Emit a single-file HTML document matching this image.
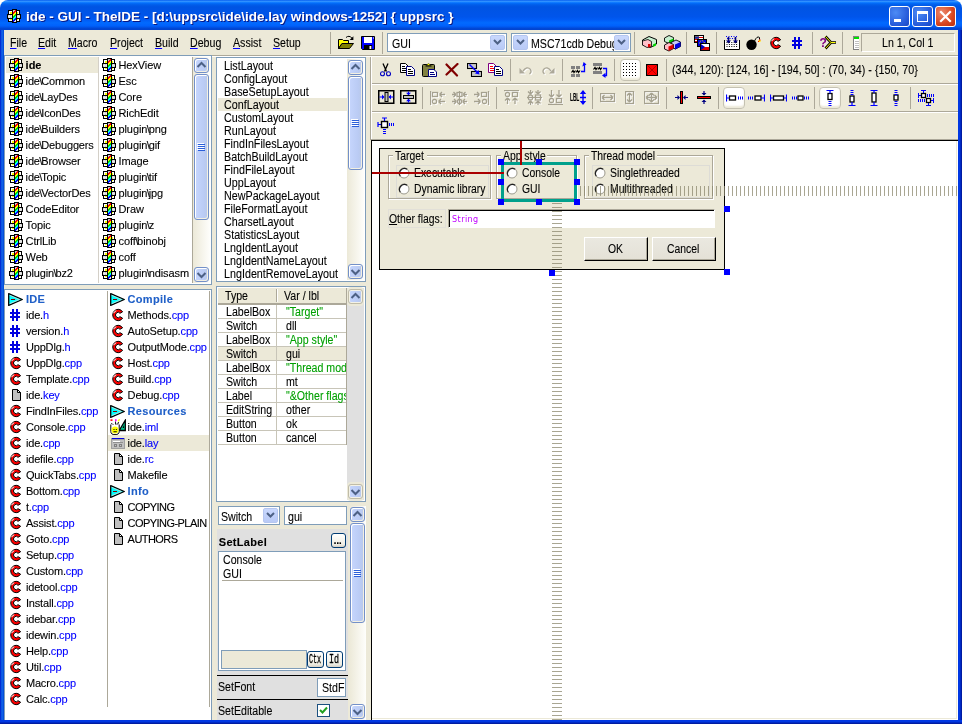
<!DOCTYPE html><html><head><meta charset="utf-8"><title>ide - GUI - TheIDE</title><style>
*{box-sizing:border-box;margin:0;padding:0}
html,body{width:962px;height:724px;overflow:hidden;background:#ECE9D8}
body{font-family:"Liberation Sans",sans-serif;font-size:11px;color:#000;position:relative}
.a,.t,.m,svg{position:absolute}
#win{position:absolute;left:0;top:0;width:962px;height:724px;background:#ECE9D8;overflow:hidden;will-change:transform}
#title{position:absolute;left:0;top:0;width:962px;height:30px;background:linear-gradient(to bottom,#0058EE 0%,#3593FF 4%,#288EFF 6%,#127DFF 8%,#036FFC 10%,#0262EE 14%,#0057E5 20%,#0054E3 24%,#0055EB 56%,#005BF5 66%,#026AFE 76%,#0061FC 86%,#0144D0 96%,#0144D0 100%);border-radius:8px 8px 0 0}
#title .txt{position:absolute;left:26px;top:9px;font-weight:bold;font-size:13.5px;line-height:16px;color:#fff;white-space:nowrap;text-shadow:1px 1px 0 #0A1883}
.bl{position:absolute;left:0;top:30px;width:4px;height:694px;background:linear-gradient(to right,#0019CF,#0441D8 25%,#166AEE 50%,#0855DD 75%,#0048D6)}
.br{position:absolute;left:958px;top:30px;width:4px;height:694px;background:linear-gradient(to right,#0037E2 0,#0037E2 45%,#0023B8 70%,#001590 100%)}
.bb{position:absolute;left:0;top:720px;width:962px;height:4px;background:linear-gradient(to bottom,#0037E2 0,#0037E2 45%,#0023B8 70%,#001590 100%)}
.tb{position:absolute;top:6px;width:21px;height:21px;border:1px solid #fff;border-radius:3px;background:radial-gradient(circle at 30% 30%,#4C8BF5,#2458D8 70%,#1C47C0)}
.tb.close{background:radial-gradient(circle at 30% 30%,#EC8A6E,#D8461F 60%,#B8300F)}
.t{white-space:nowrap;font-size:11px;line-height:16px;-webkit-text-stroke:.1px}
.m{white-space:nowrap;font-size:12px;line-height:13px;-webkit-text-stroke:.1px;transform:scaleX(.885);transform-origin:0 0}
.m u{text-decoration-color:#00f}
.vsep{position:absolute;width:2px;border-left:1px solid #ACA899;border-right:1px solid #fff}
.hsep{position:absolute;height:2px;border-top:1px solid #ACA899;border-bottom:1px solid #fff}
.panel{position:absolute;background:#fff;border:1px solid #7F9DB9}
.bs{margin:0 -1px 0 -0.5px}
.ext{color:#0000FF}
.grp{color:#2060C8;font-weight:bold;letter-spacing:.3px}
.sb{position:absolute;width:17px;background:linear-gradient(to right,#ECE9D8,#FEFEFB)}
.sbtn,.sthumb{position:absolute;left:1px;width:15px;border:1px solid #7390C8;border-radius:3px;background:linear-gradient(to right,#C6D6FD,#BACBF4 70%,#B9C9E8);box-shadow:inset 1px 1px 0 #fff,inset -1px -1px 0 #F3F0E2}
.sbtn{height:15px}
.sb.gray{background:#E0E0E0}
.sb.gray .sbtn{border-color:#C0BCA8;box-shadow:inset 0 0 0 1px #F4F2E6,0 0 0 1px #ECE9D8, 0 -1px 0 1px #ECE9D8, 0 1px 0 1px #ECE9D8}
.combo{position:absolute;background:#fff;border:1px solid #7F9DB9}
.cbtn{position:absolute;border:1px solid #B5C6F0;border-radius:2px;background:linear-gradient(to bottom,#C9D8FD,#B9CAF6)}
.xbtn{position:absolute;border:1px solid #003C74;border-radius:3px;background:linear-gradient(to bottom,#FFFFFF,#F0EEE4 80%,#D6D0C5)}
</style></head><body><div id="win">
<svg width="0" height="0"><defs><linearGradient id="rb" gradientUnits="userSpaceOnUse" x1="6" y1="1" x2="13" y2="8"><stop offset="0" stop-color="#C8C8C8"/><stop offset="0.178" stop-color="#C8C8C8"/><stop offset="0.178" stop-color="#F00"/><stop offset="0.321" stop-color="#F00"/><stop offset="0.321" stop-color="#FF0"/><stop offset="0.464" stop-color="#FF0"/><stop offset="0.464" stop-color="#0D0"/><stop offset="0.607" stop-color="#0D0"/><stop offset="0.607" stop-color="#0FF"/><stop offset="0.75" stop-color="#0FF"/><stop offset="0.75" stop-color="#00F"/><stop offset="0.893" stop-color="#00F"/><stop offset="0.893" stop-color="#E0E0E0"/><stop offset="1" stop-color="#E0E0E0"/></linearGradient></defs></svg>
<div class="a" style="left:0;top:0;width:962px;height:10px;background:#fff"></div>
<div id="title"><div class="txt">ide - GUI - TheIDE - [d:\uppsrc\ide\ide.lay windows-1252] { uppsrc }</div>
<svg style="left:7px;top:9px" width="14" height="14" viewBox="0 0 14 14" shape-rendering="crispEdges"><path d="M1 1H13V13H1Z M0 5H14V10H0Z M5 0H10V14H5Z" fill="#000"/><path d="M2 2H5V5H2Z M10 2H12V5H10Z M2 10H5V12H2Z M10 10H12V12H10Z" fill="#fff"/><path d="M3 3H5V5H3Z M10 3H11V5H10Z M3 10H5V11H3Z M10 10H11V11H10Z" fill="#FFFF00"/><path d="M1 6H5V9H1Z M10 6H13V9H10Z" fill="#C8C8C8"/><path d="M2 6H3V9H2Z M4 6H5V9H4Z M11 6H12V9H11Z M1 7H5V8H1Z M10 7H13V8H10Z" fill="#E8E8E8"/><rect x="6" y="1" width="3" height="12" fill="url(#rb)" shape-rendering="auto"/></svg>
<div class="tb" style="left:889px"><div class="a" style="left:4px;top:12px;width:7px;height:3px;background:#fff"></div></div>
<div class="tb" style="left:912px"><div class="a" style="left:4px;top:4px;width:11px;height:11px;border:1px solid #fff;border-top-width:3px"></div></div>
<div class="tb close" style="left:935px"><svg style="left:0;top:0" width="19" height="19"><path d="M5 5L14 14M14 5L5 14" stroke="#fff" stroke-width="2.2" stroke-linecap="square"/></svg></div></div>
<div class="m" style="left:10px;top:37px;"><u>F</u>ile</div>
<div class="m" style="left:38px;top:37px;"><u>E</u>dit</div>
<div class="m" style="left:68.3px;top:37px;"><u>M</u>acro</div>
<div class="m" style="left:110.3px;top:37px;"><u>P</u>roject</div>
<div class="m" style="left:155px;top:37px;"><u>B</u>uild</div>
<div class="m" style="left:190px;top:37px;"><u>D</u>ebug</div>
<div class="m" style="left:233px;top:37px;"><u>A</u>ssist</div>
<div class="m" style="left:273px;top:37px;"><u>S</u>etup</div>
<div class="a" style="left:330px;top:32px;width:1px;height:22px;background:#ACA899"></div>
<div class="a" style="left:382px;top:32px;width:1px;height:22px;background:#ACA899"></div>
<div class="a" style="left:634px;top:32px;width:1px;height:22px;background:#ACA899"></div>
<div class="a" style="left:686px;top:32px;width:1px;height:22px;background:#ACA899"></div>
<div class="a" style="left:716px;top:32px;width:1px;height:22px;background:#ACA899"></div>
<div class="a" style="left:812px;top:32px;width:1px;height:22px;background:#ACA899"></div>
<div class="a" style="left:842px;top:32px;width:1px;height:22px;background:#ACA899"></div>
<div class="combo" style="left:387px;top:33px;width:120px;height:19px">
<div class="cbtn" style="right:1px;top:1px;width:15px;height:15px"><svg width="9" height="6" viewBox="0 0 9 6" style="left:2px;top:3px"><path d="M1 1L4.5 4.5L8 1" fill="none" stroke="#4D6185" stroke-width="2"/></svg></div>
<div class="a" style="left:4px;top:3.5px;overflow:hidden;width:98px;height:15px"><div class="m" style="left:0;top:0">GUI</div></div></div>
<div class="combo" style="left:511px;top:33px;width:120px;height:19px">
<div class="cbtn" style="right:1px;top:1px;width:15px;height:15px"><svg width="9" height="6" viewBox="0 0 9 6" style="left:2px;top:3px"><path d="M1 1L4.5 4.5L8 1" fill="none" stroke="#4D6185" stroke-width="2"/></svg></div>
<div class="cbtn" style="left:1px;top:1px;width:15px;height:15px"><svg width="9" height="6" viewBox="0 0 9 6" style="left:2px;top:3px"><path d="M1 1L4.5 4.5L8 1" fill="none" stroke="#4D6185" stroke-width="2"/></svg></div>
<div class="a" style="left:19px;top:3.5px;overflow:hidden;width:83px;height:15px"><div class="m" style="left:0;top:0">MSC71cdb Debug</div></div></div>
<div class="a" style="left:861px;top:33px;width:94px;height:19px;border:1px solid;border-color:#ACA899 #fff #fff #ACA899"></div>
<div class="m" style="left:882px;top:37px;">Ln 1, Col 1</div>
<svg style="left:853px;top:36px" width="6" height="14" viewBox="0 0 6 14" shape-rendering="crispEdges"><rect x="0" y="0" width="6" height="14" fill="#fff"/><path d="M0 0H6V1H0Z M0 0H1V14H0Z M0 13H6V14H0Z" fill="#808080"/><rect x="1" y="1" width="5" height="2" fill="#00E000"/><path d="M2 5H6V6H2Z M2 7H6V8H2Z M2 9H6V10H2Z M2 11H6V12H2Z" fill="#C0C0C0"/></svg>
<div class="a" style="left:4px;top:55px;width:954px;height:1px;background:#ACA899"></div>
<div class="a" style="left:4px;top:56px;width:954px;height:1px;background:#fff"></div>
<div class="panel" style="left:4px;top:55px;width:208px;height:230px"></div>
<div class="a" style="left:6px;top:57px;width:92px;height:16px;background:#ECE9D8"></div>
<div class="a" style="left:98px;top:57px;width:1px;height:226px;background:#D4D0C8"></div>
<div class="a" style="left:192px;top:57px;width:1px;height:226px;background:#ACA899"></div>
<svg style="left:9px;top:58px" width="14" height="14" viewBox="0 0 14 14" shape-rendering="crispEdges"><path d="M1 1H13V13H1Z M0 5H14V10H0Z M5 0H10V14H5Z" fill="#000"/><path d="M2 2H5V5H2Z M10 2H12V5H10Z M2 10H5V12H2Z M10 10H12V12H10Z" fill="#fff"/><path d="M3 3H5V5H3Z M10 3H11V5H10Z M3 10H5V11H3Z M10 10H11V11H10Z" fill="#FFFF00"/><path d="M1 6H5V9H1Z M10 6H13V9H10Z" fill="#C8C8C8"/><path d="M2 6H3V9H2Z M4 6H5V9H4Z M11 6H12V9H11Z M1 7H5V8H1Z M10 7H13V8H10Z" fill="#E8E8E8"/><rect x="6" y="1" width="3" height="12" fill="url(#rb)" shape-rendering="auto"/></svg>
<div class="t" style="left:25.6px;top:57px;font-weight:bold">ide</div>
<svg style="left:102px;top:58px" width="14" height="14" viewBox="0 0 14 14" shape-rendering="crispEdges"><path d="M1 1H13V13H1Z M0 5H14V10H0Z M5 0H10V14H5Z" fill="#000"/><path d="M2 2H5V5H2Z M10 2H12V5H10Z M2 10H5V12H2Z M10 10H12V12H10Z" fill="#fff"/><path d="M3 3H5V5H3Z M10 3H11V5H10Z M3 10H5V11H3Z M10 10H11V11H10Z" fill="#FFFF00"/><path d="M1 6H5V9H1Z M10 6H13V9H10Z" fill="#C8C8C8"/><path d="M2 6H3V9H2Z M4 6H5V9H4Z M11 6H12V9H11Z M1 7H5V8H1Z M10 7H13V8H10Z" fill="#E8E8E8"/><rect x="6" y="1" width="3" height="12" fill="url(#rb)" shape-rendering="auto"/></svg>
<div class="t" style="left:118.5px;top:57px;letter-spacing:-.1px">HexView</div>
<svg style="left:9px;top:74px" width="14" height="14" viewBox="0 0 14 14" shape-rendering="crispEdges"><path d="M1 1H13V13H1Z M0 5H14V10H0Z M5 0H10V14H5Z" fill="#000"/><path d="M2 2H5V5H2Z M10 2H12V5H10Z M2 10H5V12H2Z M10 10H12V12H10Z" fill="#fff"/><path d="M3 3H5V5H3Z M10 3H11V5H10Z M3 10H5V11H3Z M10 10H11V11H10Z" fill="#FFFF00"/><path d="M1 6H5V9H1Z M10 6H13V9H10Z" fill="#C8C8C8"/><path d="M2 6H3V9H2Z M4 6H5V9H4Z M11 6H12V9H11Z M1 7H5V8H1Z M10 7H13V8H10Z" fill="#E8E8E8"/><rect x="6" y="1" width="3" height="12" fill="url(#rb)" shape-rendering="auto"/></svg>
<div class="t" style="left:25.6px;top:73px;letter-spacing:-.15px">ide<span class="bs">\</span>Common</div>
<svg style="left:102px;top:74px" width="14" height="14" viewBox="0 0 14 14" shape-rendering="crispEdges"><path d="M1 1H13V13H1Z M0 5H14V10H0Z M5 0H10V14H5Z" fill="#000"/><path d="M2 2H5V5H2Z M10 2H12V5H10Z M2 10H5V12H2Z M10 10H12V12H10Z" fill="#fff"/><path d="M3 3H5V5H3Z M10 3H11V5H10Z M3 10H5V11H3Z M10 10H11V11H10Z" fill="#FFFF00"/><path d="M1 6H5V9H1Z M10 6H13V9H10Z" fill="#C8C8C8"/><path d="M2 6H3V9H2Z M4 6H5V9H4Z M11 6H12V9H11Z M1 7H5V8H1Z M10 7H13V8H10Z" fill="#E8E8E8"/><rect x="6" y="1" width="3" height="12" fill="url(#rb)" shape-rendering="auto"/></svg>
<div class="t" style="left:118.5px;top:73px;letter-spacing:-.1px">Esc</div>
<svg style="left:9px;top:90px" width="14" height="14" viewBox="0 0 14 14" shape-rendering="crispEdges"><path d="M1 1H13V13H1Z M0 5H14V10H0Z M5 0H10V14H5Z" fill="#000"/><path d="M2 2H5V5H2Z M10 2H12V5H10Z M2 10H5V12H2Z M10 10H12V12H10Z" fill="#fff"/><path d="M3 3H5V5H3Z M10 3H11V5H10Z M3 10H5V11H3Z M10 10H11V11H10Z" fill="#FFFF00"/><path d="M1 6H5V9H1Z M10 6H13V9H10Z" fill="#C8C8C8"/><path d="M2 6H3V9H2Z M4 6H5V9H4Z M11 6H12V9H11Z M1 7H5V8H1Z M10 7H13V8H10Z" fill="#E8E8E8"/><rect x="6" y="1" width="3" height="12" fill="url(#rb)" shape-rendering="auto"/></svg>
<div class="t" style="left:25.6px;top:89px;letter-spacing:-.15px">ide<span class="bs">\</span>LayDes</div>
<svg style="left:102px;top:90px" width="14" height="14" viewBox="0 0 14 14" shape-rendering="crispEdges"><path d="M1 1H13V13H1Z M0 5H14V10H0Z M5 0H10V14H5Z" fill="#000"/><path d="M2 2H5V5H2Z M10 2H12V5H10Z M2 10H5V12H2Z M10 10H12V12H10Z" fill="#fff"/><path d="M3 3H5V5H3Z M10 3H11V5H10Z M3 10H5V11H3Z M10 10H11V11H10Z" fill="#FFFF00"/><path d="M1 6H5V9H1Z M10 6H13V9H10Z" fill="#C8C8C8"/><path d="M2 6H3V9H2Z M4 6H5V9H4Z M11 6H12V9H11Z M1 7H5V8H1Z M10 7H13V8H10Z" fill="#E8E8E8"/><rect x="6" y="1" width="3" height="12" fill="url(#rb)" shape-rendering="auto"/></svg>
<div class="t" style="left:118.5px;top:89px;letter-spacing:-.1px">Core</div>
<svg style="left:9px;top:106px" width="14" height="14" viewBox="0 0 14 14" shape-rendering="crispEdges"><path d="M1 1H13V13H1Z M0 5H14V10H0Z M5 0H10V14H5Z" fill="#000"/><path d="M2 2H5V5H2Z M10 2H12V5H10Z M2 10H5V12H2Z M10 10H12V12H10Z" fill="#fff"/><path d="M3 3H5V5H3Z M10 3H11V5H10Z M3 10H5V11H3Z M10 10H11V11H10Z" fill="#FFFF00"/><path d="M1 6H5V9H1Z M10 6H13V9H10Z" fill="#C8C8C8"/><path d="M2 6H3V9H2Z M4 6H5V9H4Z M11 6H12V9H11Z M1 7H5V8H1Z M10 7H13V8H10Z" fill="#E8E8E8"/><rect x="6" y="1" width="3" height="12" fill="url(#rb)" shape-rendering="auto"/></svg>
<div class="t" style="left:25.6px;top:105px;letter-spacing:-.15px">ide<span class="bs">\</span>IconDes</div>
<svg style="left:102px;top:106px" width="14" height="14" viewBox="0 0 14 14" shape-rendering="crispEdges"><path d="M1 1H13V13H1Z M0 5H14V10H0Z M5 0H10V14H5Z" fill="#000"/><path d="M2 2H5V5H2Z M10 2H12V5H10Z M2 10H5V12H2Z M10 10H12V12H10Z" fill="#fff"/><path d="M3 3H5V5H3Z M10 3H11V5H10Z M3 10H5V11H3Z M10 10H11V11H10Z" fill="#FFFF00"/><path d="M1 6H5V9H1Z M10 6H13V9H10Z" fill="#C8C8C8"/><path d="M2 6H3V9H2Z M4 6H5V9H4Z M11 6H12V9H11Z M1 7H5V8H1Z M10 7H13V8H10Z" fill="#E8E8E8"/><rect x="6" y="1" width="3" height="12" fill="url(#rb)" shape-rendering="auto"/></svg>
<div class="t" style="left:118.5px;top:105px;letter-spacing:-.1px">RichEdit</div>
<svg style="left:9px;top:122px" width="14" height="14" viewBox="0 0 14 14" shape-rendering="crispEdges"><path d="M1 1H13V13H1Z M0 5H14V10H0Z M5 0H10V14H5Z" fill="#000"/><path d="M2 2H5V5H2Z M10 2H12V5H10Z M2 10H5V12H2Z M10 10H12V12H10Z" fill="#fff"/><path d="M3 3H5V5H3Z M10 3H11V5H10Z M3 10H5V11H3Z M10 10H11V11H10Z" fill="#FFFF00"/><path d="M1 6H5V9H1Z M10 6H13V9H10Z" fill="#C8C8C8"/><path d="M2 6H3V9H2Z M4 6H5V9H4Z M11 6H12V9H11Z M1 7H5V8H1Z M10 7H13V8H10Z" fill="#E8E8E8"/><rect x="6" y="1" width="3" height="12" fill="url(#rb)" shape-rendering="auto"/></svg>
<div class="t" style="left:25.6px;top:121px;letter-spacing:-.15px">ide<span class="bs">\</span>Builders</div>
<svg style="left:102px;top:122px" width="14" height="14" viewBox="0 0 14 14" shape-rendering="crispEdges"><path d="M1 1H13V13H1Z M0 5H14V10H0Z M5 0H10V14H5Z" fill="#000"/><path d="M2 2H5V5H2Z M10 2H12V5H10Z M2 10H5V12H2Z M10 10H12V12H10Z" fill="#fff"/><path d="M3 3H5V5H3Z M10 3H11V5H10Z M3 10H5V11H3Z M10 10H11V11H10Z" fill="#FFFF00"/><path d="M1 6H5V9H1Z M10 6H13V9H10Z" fill="#C8C8C8"/><path d="M2 6H3V9H2Z M4 6H5V9H4Z M11 6H12V9H11Z M1 7H5V8H1Z M10 7H13V8H10Z" fill="#E8E8E8"/><rect x="6" y="1" width="3" height="12" fill="url(#rb)" shape-rendering="auto"/></svg>
<div class="t" style="left:118.5px;top:121px;letter-spacing:-.1px">plugin<span class="bs">\</span>png</div>
<svg style="left:9px;top:138px" width="14" height="14" viewBox="0 0 14 14" shape-rendering="crispEdges"><path d="M1 1H13V13H1Z M0 5H14V10H0Z M5 0H10V14H5Z" fill="#000"/><path d="M2 2H5V5H2Z M10 2H12V5H10Z M2 10H5V12H2Z M10 10H12V12H10Z" fill="#fff"/><path d="M3 3H5V5H3Z M10 3H11V5H10Z M3 10H5V11H3Z M10 10H11V11H10Z" fill="#FFFF00"/><path d="M1 6H5V9H1Z M10 6H13V9H10Z" fill="#C8C8C8"/><path d="M2 6H3V9H2Z M4 6H5V9H4Z M11 6H12V9H11Z M1 7H5V8H1Z M10 7H13V8H10Z" fill="#E8E8E8"/><rect x="6" y="1" width="3" height="12" fill="url(#rb)" shape-rendering="auto"/></svg>
<div class="t" style="left:25.6px;top:137px;letter-spacing:-.15px">ide<span class="bs">\</span>Debuggers</div>
<svg style="left:102px;top:138px" width="14" height="14" viewBox="0 0 14 14" shape-rendering="crispEdges"><path d="M1 1H13V13H1Z M0 5H14V10H0Z M5 0H10V14H5Z" fill="#000"/><path d="M2 2H5V5H2Z M10 2H12V5H10Z M2 10H5V12H2Z M10 10H12V12H10Z" fill="#fff"/><path d="M3 3H5V5H3Z M10 3H11V5H10Z M3 10H5V11H3Z M10 10H11V11H10Z" fill="#FFFF00"/><path d="M1 6H5V9H1Z M10 6H13V9H10Z" fill="#C8C8C8"/><path d="M2 6H3V9H2Z M4 6H5V9H4Z M11 6H12V9H11Z M1 7H5V8H1Z M10 7H13V8H10Z" fill="#E8E8E8"/><rect x="6" y="1" width="3" height="12" fill="url(#rb)" shape-rendering="auto"/></svg>
<div class="t" style="left:118.5px;top:137px;letter-spacing:-.1px">plugin<span class="bs">\</span>gif</div>
<svg style="left:9px;top:154px" width="14" height="14" viewBox="0 0 14 14" shape-rendering="crispEdges"><path d="M1 1H13V13H1Z M0 5H14V10H0Z M5 0H10V14H5Z" fill="#000"/><path d="M2 2H5V5H2Z M10 2H12V5H10Z M2 10H5V12H2Z M10 10H12V12H10Z" fill="#fff"/><path d="M3 3H5V5H3Z M10 3H11V5H10Z M3 10H5V11H3Z M10 10H11V11H10Z" fill="#FFFF00"/><path d="M1 6H5V9H1Z M10 6H13V9H10Z" fill="#C8C8C8"/><path d="M2 6H3V9H2Z M4 6H5V9H4Z M11 6H12V9H11Z M1 7H5V8H1Z M10 7H13V8H10Z" fill="#E8E8E8"/><rect x="6" y="1" width="3" height="12" fill="url(#rb)" shape-rendering="auto"/></svg>
<div class="t" style="left:25.6px;top:153px;letter-spacing:-.15px">ide<span class="bs">\</span>Browser</div>
<svg style="left:102px;top:154px" width="14" height="14" viewBox="0 0 14 14" shape-rendering="crispEdges"><path d="M1 1H13V13H1Z M0 5H14V10H0Z M5 0H10V14H5Z" fill="#000"/><path d="M2 2H5V5H2Z M10 2H12V5H10Z M2 10H5V12H2Z M10 10H12V12H10Z" fill="#fff"/><path d="M3 3H5V5H3Z M10 3H11V5H10Z M3 10H5V11H3Z M10 10H11V11H10Z" fill="#FFFF00"/><path d="M1 6H5V9H1Z M10 6H13V9H10Z" fill="#C8C8C8"/><path d="M2 6H3V9H2Z M4 6H5V9H4Z M11 6H12V9H11Z M1 7H5V8H1Z M10 7H13V8H10Z" fill="#E8E8E8"/><rect x="6" y="1" width="3" height="12" fill="url(#rb)" shape-rendering="auto"/></svg>
<div class="t" style="left:118.5px;top:153px;letter-spacing:-.1px">Image</div>
<svg style="left:9px;top:170px" width="14" height="14" viewBox="0 0 14 14" shape-rendering="crispEdges"><path d="M1 1H13V13H1Z M0 5H14V10H0Z M5 0H10V14H5Z" fill="#000"/><path d="M2 2H5V5H2Z M10 2H12V5H10Z M2 10H5V12H2Z M10 10H12V12H10Z" fill="#fff"/><path d="M3 3H5V5H3Z M10 3H11V5H10Z M3 10H5V11H3Z M10 10H11V11H10Z" fill="#FFFF00"/><path d="M1 6H5V9H1Z M10 6H13V9H10Z" fill="#C8C8C8"/><path d="M2 6H3V9H2Z M4 6H5V9H4Z M11 6H12V9H11Z M1 7H5V8H1Z M10 7H13V8H10Z" fill="#E8E8E8"/><rect x="6" y="1" width="3" height="12" fill="url(#rb)" shape-rendering="auto"/></svg>
<div class="t" style="left:25.6px;top:169px;letter-spacing:-.15px">ide<span class="bs">\</span>Topic</div>
<svg style="left:102px;top:170px" width="14" height="14" viewBox="0 0 14 14" shape-rendering="crispEdges"><path d="M1 1H13V13H1Z M0 5H14V10H0Z M5 0H10V14H5Z" fill="#000"/><path d="M2 2H5V5H2Z M10 2H12V5H10Z M2 10H5V12H2Z M10 10H12V12H10Z" fill="#fff"/><path d="M3 3H5V5H3Z M10 3H11V5H10Z M3 10H5V11H3Z M10 10H11V11H10Z" fill="#FFFF00"/><path d="M1 6H5V9H1Z M10 6H13V9H10Z" fill="#C8C8C8"/><path d="M2 6H3V9H2Z M4 6H5V9H4Z M11 6H12V9H11Z M1 7H5V8H1Z M10 7H13V8H10Z" fill="#E8E8E8"/><rect x="6" y="1" width="3" height="12" fill="url(#rb)" shape-rendering="auto"/></svg>
<div class="t" style="left:118.5px;top:169px;letter-spacing:-.1px">plugin<span class="bs">\</span>tif</div>
<svg style="left:9px;top:186px" width="14" height="14" viewBox="0 0 14 14" shape-rendering="crispEdges"><path d="M1 1H13V13H1Z M0 5H14V10H0Z M5 0H10V14H5Z" fill="#000"/><path d="M2 2H5V5H2Z M10 2H12V5H10Z M2 10H5V12H2Z M10 10H12V12H10Z" fill="#fff"/><path d="M3 3H5V5H3Z M10 3H11V5H10Z M3 10H5V11H3Z M10 10H11V11H10Z" fill="#FFFF00"/><path d="M1 6H5V9H1Z M10 6H13V9H10Z" fill="#C8C8C8"/><path d="M2 6H3V9H2Z M4 6H5V9H4Z M11 6H12V9H11Z M1 7H5V8H1Z M10 7H13V8H10Z" fill="#E8E8E8"/><rect x="6" y="1" width="3" height="12" fill="url(#rb)" shape-rendering="auto"/></svg>
<div class="t" style="left:25.6px;top:185px;letter-spacing:-.15px">ide<span class="bs">\</span>VectorDes</div>
<svg style="left:102px;top:186px" width="14" height="14" viewBox="0 0 14 14" shape-rendering="crispEdges"><path d="M1 1H13V13H1Z M0 5H14V10H0Z M5 0H10V14H5Z" fill="#000"/><path d="M2 2H5V5H2Z M10 2H12V5H10Z M2 10H5V12H2Z M10 10H12V12H10Z" fill="#fff"/><path d="M3 3H5V5H3Z M10 3H11V5H10Z M3 10H5V11H3Z M10 10H11V11H10Z" fill="#FFFF00"/><path d="M1 6H5V9H1Z M10 6H13V9H10Z" fill="#C8C8C8"/><path d="M2 6H3V9H2Z M4 6H5V9H4Z M11 6H12V9H11Z M1 7H5V8H1Z M10 7H13V8H10Z" fill="#E8E8E8"/><rect x="6" y="1" width="3" height="12" fill="url(#rb)" shape-rendering="auto"/></svg>
<div class="t" style="left:118.5px;top:185px;letter-spacing:-.1px">plugin<span class="bs">\</span>jpg</div>
<svg style="left:9px;top:202px" width="14" height="14" viewBox="0 0 14 14" shape-rendering="crispEdges"><path d="M1 1H13V13H1Z M0 5H14V10H0Z M5 0H10V14H5Z" fill="#000"/><path d="M2 2H5V5H2Z M10 2H12V5H10Z M2 10H5V12H2Z M10 10H12V12H10Z" fill="#fff"/><path d="M3 3H5V5H3Z M10 3H11V5H10Z M3 10H5V11H3Z M10 10H11V11H10Z" fill="#FFFF00"/><path d="M1 6H5V9H1Z M10 6H13V9H10Z" fill="#C8C8C8"/><path d="M2 6H3V9H2Z M4 6H5V9H4Z M11 6H12V9H11Z M1 7H5V8H1Z M10 7H13V8H10Z" fill="#E8E8E8"/><rect x="6" y="1" width="3" height="12" fill="url(#rb)" shape-rendering="auto"/></svg>
<div class="t" style="left:25.6px;top:201px;letter-spacing:-.15px">CodeEditor</div>
<svg style="left:102px;top:202px" width="14" height="14" viewBox="0 0 14 14" shape-rendering="crispEdges"><path d="M1 1H13V13H1Z M0 5H14V10H0Z M5 0H10V14H5Z" fill="#000"/><path d="M2 2H5V5H2Z M10 2H12V5H10Z M2 10H5V12H2Z M10 10H12V12H10Z" fill="#fff"/><path d="M3 3H5V5H3Z M10 3H11V5H10Z M3 10H5V11H3Z M10 10H11V11H10Z" fill="#FFFF00"/><path d="M1 6H5V9H1Z M10 6H13V9H10Z" fill="#C8C8C8"/><path d="M2 6H3V9H2Z M4 6H5V9H4Z M11 6H12V9H11Z M1 7H5V8H1Z M10 7H13V8H10Z" fill="#E8E8E8"/><rect x="6" y="1" width="3" height="12" fill="url(#rb)" shape-rendering="auto"/></svg>
<div class="t" style="left:118.5px;top:201px;letter-spacing:-.1px">Draw</div>
<svg style="left:9px;top:218px" width="14" height="14" viewBox="0 0 14 14" shape-rendering="crispEdges"><path d="M1 1H13V13H1Z M0 5H14V10H0Z M5 0H10V14H5Z" fill="#000"/><path d="M2 2H5V5H2Z M10 2H12V5H10Z M2 10H5V12H2Z M10 10H12V12H10Z" fill="#fff"/><path d="M3 3H5V5H3Z M10 3H11V5H10Z M3 10H5V11H3Z M10 10H11V11H10Z" fill="#FFFF00"/><path d="M1 6H5V9H1Z M10 6H13V9H10Z" fill="#C8C8C8"/><path d="M2 6H3V9H2Z M4 6H5V9H4Z M11 6H12V9H11Z M1 7H5V8H1Z M10 7H13V8H10Z" fill="#E8E8E8"/><rect x="6" y="1" width="3" height="12" fill="url(#rb)" shape-rendering="auto"/></svg>
<div class="t" style="left:25.6px;top:217px;letter-spacing:-.15px">Topic</div>
<svg style="left:102px;top:218px" width="14" height="14" viewBox="0 0 14 14" shape-rendering="crispEdges"><path d="M1 1H13V13H1Z M0 5H14V10H0Z M5 0H10V14H5Z" fill="#000"/><path d="M2 2H5V5H2Z M10 2H12V5H10Z M2 10H5V12H2Z M10 10H12V12H10Z" fill="#fff"/><path d="M3 3H5V5H3Z M10 3H11V5H10Z M3 10H5V11H3Z M10 10H11V11H10Z" fill="#FFFF00"/><path d="M1 6H5V9H1Z M10 6H13V9H10Z" fill="#C8C8C8"/><path d="M2 6H3V9H2Z M4 6H5V9H4Z M11 6H12V9H11Z M1 7H5V8H1Z M10 7H13V8H10Z" fill="#E8E8E8"/><rect x="6" y="1" width="3" height="12" fill="url(#rb)" shape-rendering="auto"/></svg>
<div class="t" style="left:118.5px;top:217px;letter-spacing:-.1px">plugin<span class="bs">\</span>z</div>
<svg style="left:9px;top:234px" width="14" height="14" viewBox="0 0 14 14" shape-rendering="crispEdges"><path d="M1 1H13V13H1Z M0 5H14V10H0Z M5 0H10V14H5Z" fill="#000"/><path d="M2 2H5V5H2Z M10 2H12V5H10Z M2 10H5V12H2Z M10 10H12V12H10Z" fill="#fff"/><path d="M3 3H5V5H3Z M10 3H11V5H10Z M3 10H5V11H3Z M10 10H11V11H10Z" fill="#FFFF00"/><path d="M1 6H5V9H1Z M10 6H13V9H10Z" fill="#C8C8C8"/><path d="M2 6H3V9H2Z M4 6H5V9H4Z M11 6H12V9H11Z M1 7H5V8H1Z M10 7H13V8H10Z" fill="#E8E8E8"/><rect x="6" y="1" width="3" height="12" fill="url(#rb)" shape-rendering="auto"/></svg>
<div class="t" style="left:25.6px;top:233px;letter-spacing:-.15px">CtrlLib</div>
<svg style="left:102px;top:234px" width="14" height="14" viewBox="0 0 14 14" shape-rendering="crispEdges"><path d="M1 1H13V13H1Z M0 5H14V10H0Z M5 0H10V14H5Z" fill="#000"/><path d="M2 2H5V5H2Z M10 2H12V5H10Z M2 10H5V12H2Z M10 10H12V12H10Z" fill="#fff"/><path d="M3 3H5V5H3Z M10 3H11V5H10Z M3 10H5V11H3Z M10 10H11V11H10Z" fill="#FFFF00"/><path d="M1 6H5V9H1Z M10 6H13V9H10Z" fill="#C8C8C8"/><path d="M2 6H3V9H2Z M4 6H5V9H4Z M11 6H12V9H11Z M1 7H5V8H1Z M10 7H13V8H10Z" fill="#E8E8E8"/><rect x="6" y="1" width="3" height="12" fill="url(#rb)" shape-rendering="auto"/></svg>
<div class="t" style="left:118.5px;top:233px;letter-spacing:-.1px">coff<span class="bs">\</span>binobj</div>
<svg style="left:9px;top:250px" width="14" height="14" viewBox="0 0 14 14" shape-rendering="crispEdges"><path d="M1 1H13V13H1Z M0 5H14V10H0Z M5 0H10V14H5Z" fill="#000"/><path d="M2 2H5V5H2Z M10 2H12V5H10Z M2 10H5V12H2Z M10 10H12V12H10Z" fill="#fff"/><path d="M3 3H5V5H3Z M10 3H11V5H10Z M3 10H5V11H3Z M10 10H11V11H10Z" fill="#FFFF00"/><path d="M1 6H5V9H1Z M10 6H13V9H10Z" fill="#C8C8C8"/><path d="M2 6H3V9H2Z M4 6H5V9H4Z M11 6H12V9H11Z M1 7H5V8H1Z M10 7H13V8H10Z" fill="#E8E8E8"/><rect x="6" y="1" width="3" height="12" fill="url(#rb)" shape-rendering="auto"/></svg>
<div class="t" style="left:25.6px;top:249px;letter-spacing:-.15px">Web</div>
<svg style="left:102px;top:250px" width="14" height="14" viewBox="0 0 14 14" shape-rendering="crispEdges"><path d="M1 1H13V13H1Z M0 5H14V10H0Z M5 0H10V14H5Z" fill="#000"/><path d="M2 2H5V5H2Z M10 2H12V5H10Z M2 10H5V12H2Z M10 10H12V12H10Z" fill="#fff"/><path d="M3 3H5V5H3Z M10 3H11V5H10Z M3 10H5V11H3Z M10 10H11V11H10Z" fill="#FFFF00"/><path d="M1 6H5V9H1Z M10 6H13V9H10Z" fill="#C8C8C8"/><path d="M2 6H3V9H2Z M4 6H5V9H4Z M11 6H12V9H11Z M1 7H5V8H1Z M10 7H13V8H10Z" fill="#E8E8E8"/><rect x="6" y="1" width="3" height="12" fill="url(#rb)" shape-rendering="auto"/></svg>
<div class="t" style="left:118.5px;top:249px;letter-spacing:-.1px">coff</div>
<svg style="left:9px;top:266px" width="14" height="14" viewBox="0 0 14 14" shape-rendering="crispEdges"><path d="M1 1H13V13H1Z M0 5H14V10H0Z M5 0H10V14H5Z" fill="#000"/><path d="M2 2H5V5H2Z M10 2H12V5H10Z M2 10H5V12H2Z M10 10H12V12H10Z" fill="#fff"/><path d="M3 3H5V5H3Z M10 3H11V5H10Z M3 10H5V11H3Z M10 10H11V11H10Z" fill="#FFFF00"/><path d="M1 6H5V9H1Z M10 6H13V9H10Z" fill="#C8C8C8"/><path d="M2 6H3V9H2Z M4 6H5V9H4Z M11 6H12V9H11Z M1 7H5V8H1Z M10 7H13V8H10Z" fill="#E8E8E8"/><rect x="6" y="1" width="3" height="12" fill="url(#rb)" shape-rendering="auto"/></svg>
<div class="t" style="left:25.6px;top:265px;letter-spacing:-.15px">plugin<span class="bs">\</span>bz2</div>
<svg style="left:102px;top:266px" width="14" height="14" viewBox="0 0 14 14" shape-rendering="crispEdges"><path d="M1 1H13V13H1Z M0 5H14V10H0Z M5 0H10V14H5Z" fill="#000"/><path d="M2 2H5V5H2Z M10 2H12V5H10Z M2 10H5V12H2Z M10 10H12V12H10Z" fill="#fff"/><path d="M3 3H5V5H3Z M10 3H11V5H10Z M3 10H5V11H3Z M10 10H11V11H10Z" fill="#FFFF00"/><path d="M1 6H5V9H1Z M10 6H13V9H10Z" fill="#C8C8C8"/><path d="M2 6H3V9H2Z M4 6H5V9H4Z M11 6H12V9H11Z M1 7H5V8H1Z M10 7H13V8H10Z" fill="#E8E8E8"/><rect x="6" y="1" width="3" height="12" fill="url(#rb)" shape-rendering="auto"/></svg>
<div class="t" style="left:118.5px;top:265px;letter-spacing:-.1px">plugin<span class="bs">\</span>ndisasm</div>
<div class="sb" style="left:193px;top:57px;height:226px">
<div class="sbtn" style="top:1px"><svg width="13" height="13" viewBox="0 0 13 13" style="left:0;top:0"><path d="M2.5 8L6.5 4L10.5 8" fill="none" stroke="#4D6185" stroke-width="2"/></svg></div>
<div class="sthumb" style="top:17px;height:146px"><svg width="13" height="9" viewBox="0 0 13 9" shape-rendering="crispEdges" style="left:0;top:68px"><path d="M2 0H9V1H2Z M2 2H9V3H2Z M2 4H9V5H2Z M2 6H9V7H2Z" fill="#fff"/><path d="M3 1H10V2H3Z M3 3H10V4H3Z M3 5H10V6H3Z M3 7H10V8H3Z" fill="#2B5FD9"/></svg></div>
<div class="sbtn" style="top:210px"><svg width="13" height="13" viewBox="0 0 13 13" style="left:0;top:0"><path d="M2.5 5L6.5 9L10.5 5" fill="none" stroke="#4D6185" stroke-width="2"/></svg></div></div>
<div class="panel" style="left:4px;top:289px;width:208px;height:436px"></div>
<div class="a" style="left:107px;top:291px;width:1px;height:416px;background:#ACA899"></div>
<div class="a" style="left:209px;top:291px;width:1px;height:416px;background:#ACA899"></div>
<div class="a" style="left:108px;top:435px;width:101px;height:16px;background:#ECE9D8"></div>
<svg style="left:8px;top:291px" width="16" height="16" viewBox="0 0 16 16"><path d="M0.7 2.6L14.3 8.5L0.7 14.4Z" fill="#00FFFF" stroke="#000" stroke-width="1.3" stroke-linejoin="round"/><path d="M1.6 4.2L11.4 8.5L1.6 12.8" fill="none" stroke="#F0D8D0" stroke-width="0.7"/><rect x="3" y="8" width="4" height="1" fill="#800000"/></svg>
<div class="t" style="left:25.9px;top:291px;letter-spacing:-.15px"><span class="grp">IDE</span></div>
<svg style="left:8px;top:307px" width="16" height="16" viewBox="0 0 16 16" shape-rendering="crispEdges"><path d="M4 2H6V14H4Z M8 2H10V14H8Z M2 5H12V7H2Z M2 9H12V11H2Z" fill="#0000E0"/></svg>
<div class="t" style="left:25.9px;top:307px;letter-spacing:-.15px">ide.<span class="ext">h</span></div>
<svg style="left:8px;top:323px" width="16" height="16" viewBox="0 0 16 16" shape-rendering="crispEdges"><path d="M4 2H6V14H4Z M8 2H10V14H8Z M2 5H12V7H2Z M2 9H12V11H2Z" fill="#0000E0"/></svg>
<div class="t" style="left:25.9px;top:323px;letter-spacing:-.15px">version.<span class="ext">h</span></div>
<svg style="left:8px;top:339px" width="16" height="16" viewBox="0 0 16 16" shape-rendering="crispEdges"><path d="M4 2H6V14H4Z M8 2H10V14H8Z M2 5H12V7H2Z M2 9H12V11H2Z" fill="#0000E0"/></svg>
<div class="t" style="left:25.9px;top:339px;letter-spacing:-.15px">UppDlg.<span class="ext">h</span></div>
<svg style="left:8px;top:355px" width="16" height="16" viewBox="0 0 16 16"><circle cx="7.3" cy="8" r="3" fill="#fff"/><path d="M12.6 4.8A5.4 5.7 0 1 0 12.6 11.2L10 9.7A2.5 2.7 0 1 1 10 6.3Z" fill="#FF0000" stroke="#000" stroke-linejoin="round"/><path d="M3.6 6.2A4 4 0 0 1 6.2 3.8" stroke="#fff" stroke-width="1" fill="none"/></svg>
<div class="t" style="left:25.9px;top:355px;letter-spacing:-.15px">UppDlg.<span class="ext">cpp</span></div>
<svg style="left:8px;top:371px" width="16" height="16" viewBox="0 0 16 16"><circle cx="7.3" cy="8" r="3" fill="#fff"/><path d="M12.6 4.8A5.4 5.7 0 1 0 12.6 11.2L10 9.7A2.5 2.7 0 1 1 10 6.3Z" fill="#FF0000" stroke="#000" stroke-linejoin="round"/><path d="M3.6 6.2A4 4 0 0 1 6.2 3.8" stroke="#fff" stroke-width="1" fill="none"/></svg>
<div class="t" style="left:25.9px;top:371px;letter-spacing:-.15px">Template.<span class="ext">cpp</span></div>
<svg style="left:8px;top:387px" width="16" height="16" viewBox="0 0 16 16"><path d="M4.5 2.5H9.5L12.5 5.5V13.5H4.5Z" fill="#C0C0C0" stroke="#000"/><path d="M9.5 2.5V5.5H12.5Z" fill="#fff" stroke="#000" stroke-linejoin="round"/></svg>
<div class="t" style="left:25.9px;top:387px;letter-spacing:-.15px">ide.<span class="ext">key</span></div>
<svg style="left:8px;top:403px" width="16" height="16" viewBox="0 0 16 16"><circle cx="7.3" cy="8" r="3" fill="#fff"/><path d="M12.6 4.8A5.4 5.7 0 1 0 12.6 11.2L10 9.7A2.5 2.7 0 1 1 10 6.3Z" fill="#FF0000" stroke="#000" stroke-linejoin="round"/><path d="M3.6 6.2A4 4 0 0 1 6.2 3.8" stroke="#fff" stroke-width="1" fill="none"/></svg>
<div class="t" style="left:25.9px;top:403px;letter-spacing:-.15px">FindInFiles.<span class="ext">cpp</span></div>
<svg style="left:8px;top:419px" width="16" height="16" viewBox="0 0 16 16"><circle cx="7.3" cy="8" r="3" fill="#fff"/><path d="M12.6 4.8A5.4 5.7 0 1 0 12.6 11.2L10 9.7A2.5 2.7 0 1 1 10 6.3Z" fill="#FF0000" stroke="#000" stroke-linejoin="round"/><path d="M3.6 6.2A4 4 0 0 1 6.2 3.8" stroke="#fff" stroke-width="1" fill="none"/></svg>
<div class="t" style="left:25.9px;top:419px;letter-spacing:-.15px">Console.<span class="ext">cpp</span></div>
<svg style="left:8px;top:435px" width="16" height="16" viewBox="0 0 16 16"><circle cx="7.3" cy="8" r="3" fill="#fff"/><path d="M12.6 4.8A5.4 5.7 0 1 0 12.6 11.2L10 9.7A2.5 2.7 0 1 1 10 6.3Z" fill="#FF0000" stroke="#000" stroke-linejoin="round"/><path d="M3.6 6.2A4 4 0 0 1 6.2 3.8" stroke="#fff" stroke-width="1" fill="none"/></svg>
<div class="t" style="left:25.9px;top:435px;letter-spacing:-.15px">ide.<span class="ext">cpp</span></div>
<svg style="left:8px;top:451px" width="16" height="16" viewBox="0 0 16 16"><circle cx="7.3" cy="8" r="3" fill="#fff"/><path d="M12.6 4.8A5.4 5.7 0 1 0 12.6 11.2L10 9.7A2.5 2.7 0 1 1 10 6.3Z" fill="#FF0000" stroke="#000" stroke-linejoin="round"/><path d="M3.6 6.2A4 4 0 0 1 6.2 3.8" stroke="#fff" stroke-width="1" fill="none"/></svg>
<div class="t" style="left:25.9px;top:451px;letter-spacing:-.15px">idefile.<span class="ext">cpp</span></div>
<svg style="left:8px;top:467px" width="16" height="16" viewBox="0 0 16 16"><circle cx="7.3" cy="8" r="3" fill="#fff"/><path d="M12.6 4.8A5.4 5.7 0 1 0 12.6 11.2L10 9.7A2.5 2.7 0 1 1 10 6.3Z" fill="#FF0000" stroke="#000" stroke-linejoin="round"/><path d="M3.6 6.2A4 4 0 0 1 6.2 3.8" stroke="#fff" stroke-width="1" fill="none"/></svg>
<div class="t" style="left:25.9px;top:467px;letter-spacing:-.15px">QuickTabs.<span class="ext">cpp</span></div>
<svg style="left:8px;top:483px" width="16" height="16" viewBox="0 0 16 16"><circle cx="7.3" cy="8" r="3" fill="#fff"/><path d="M12.6 4.8A5.4 5.7 0 1 0 12.6 11.2L10 9.7A2.5 2.7 0 1 1 10 6.3Z" fill="#FF0000" stroke="#000" stroke-linejoin="round"/><path d="M3.6 6.2A4 4 0 0 1 6.2 3.8" stroke="#fff" stroke-width="1" fill="none"/></svg>
<div class="t" style="left:25.9px;top:483px;letter-spacing:-.15px">Bottom.<span class="ext">cpp</span></div>
<svg style="left:8px;top:499px" width="16" height="16" viewBox="0 0 16 16"><circle cx="7.3" cy="8" r="3" fill="#fff"/><path d="M12.6 4.8A5.4 5.7 0 1 0 12.6 11.2L10 9.7A2.5 2.7 0 1 1 10 6.3Z" fill="#FF0000" stroke="#000" stroke-linejoin="round"/><path d="M3.6 6.2A4 4 0 0 1 6.2 3.8" stroke="#fff" stroke-width="1" fill="none"/></svg>
<div class="t" style="left:25.9px;top:499px;letter-spacing:-.15px">t.<span class="ext">cpp</span></div>
<svg style="left:8px;top:515px" width="16" height="16" viewBox="0 0 16 16"><circle cx="7.3" cy="8" r="3" fill="#fff"/><path d="M12.6 4.8A5.4 5.7 0 1 0 12.6 11.2L10 9.7A2.5 2.7 0 1 1 10 6.3Z" fill="#FF0000" stroke="#000" stroke-linejoin="round"/><path d="M3.6 6.2A4 4 0 0 1 6.2 3.8" stroke="#fff" stroke-width="1" fill="none"/></svg>
<div class="t" style="left:25.9px;top:515px;letter-spacing:-.15px">Assist.<span class="ext">cpp</span></div>
<svg style="left:8px;top:531px" width="16" height="16" viewBox="0 0 16 16"><circle cx="7.3" cy="8" r="3" fill="#fff"/><path d="M12.6 4.8A5.4 5.7 0 1 0 12.6 11.2L10 9.7A2.5 2.7 0 1 1 10 6.3Z" fill="#FF0000" stroke="#000" stroke-linejoin="round"/><path d="M3.6 6.2A4 4 0 0 1 6.2 3.8" stroke="#fff" stroke-width="1" fill="none"/></svg>
<div class="t" style="left:25.9px;top:531px;letter-spacing:-.15px">Goto.<span class="ext">cpp</span></div>
<svg style="left:8px;top:547px" width="16" height="16" viewBox="0 0 16 16"><circle cx="7.3" cy="8" r="3" fill="#fff"/><path d="M12.6 4.8A5.4 5.7 0 1 0 12.6 11.2L10 9.7A2.5 2.7 0 1 1 10 6.3Z" fill="#FF0000" stroke="#000" stroke-linejoin="round"/><path d="M3.6 6.2A4 4 0 0 1 6.2 3.8" stroke="#fff" stroke-width="1" fill="none"/></svg>
<div class="t" style="left:25.9px;top:547px;letter-spacing:-.15px">Setup.<span class="ext">cpp</span></div>
<svg style="left:8px;top:563px" width="16" height="16" viewBox="0 0 16 16"><circle cx="7.3" cy="8" r="3" fill="#fff"/><path d="M12.6 4.8A5.4 5.7 0 1 0 12.6 11.2L10 9.7A2.5 2.7 0 1 1 10 6.3Z" fill="#FF0000" stroke="#000" stroke-linejoin="round"/><path d="M3.6 6.2A4 4 0 0 1 6.2 3.8" stroke="#fff" stroke-width="1" fill="none"/></svg>
<div class="t" style="left:25.9px;top:563px;letter-spacing:-.15px">Custom.<span class="ext">cpp</span></div>
<svg style="left:8px;top:579px" width="16" height="16" viewBox="0 0 16 16"><circle cx="7.3" cy="8" r="3" fill="#fff"/><path d="M12.6 4.8A5.4 5.7 0 1 0 12.6 11.2L10 9.7A2.5 2.7 0 1 1 10 6.3Z" fill="#FF0000" stroke="#000" stroke-linejoin="round"/><path d="M3.6 6.2A4 4 0 0 1 6.2 3.8" stroke="#fff" stroke-width="1" fill="none"/></svg>
<div class="t" style="left:25.9px;top:579px;letter-spacing:-.15px">idetool.<span class="ext">cpp</span></div>
<svg style="left:8px;top:595px" width="16" height="16" viewBox="0 0 16 16"><circle cx="7.3" cy="8" r="3" fill="#fff"/><path d="M12.6 4.8A5.4 5.7 0 1 0 12.6 11.2L10 9.7A2.5 2.7 0 1 1 10 6.3Z" fill="#FF0000" stroke="#000" stroke-linejoin="round"/><path d="M3.6 6.2A4 4 0 0 1 6.2 3.8" stroke="#fff" stroke-width="1" fill="none"/></svg>
<div class="t" style="left:25.9px;top:595px;letter-spacing:-.15px">Install.<span class="ext">cpp</span></div>
<svg style="left:8px;top:611px" width="16" height="16" viewBox="0 0 16 16"><circle cx="7.3" cy="8" r="3" fill="#fff"/><path d="M12.6 4.8A5.4 5.7 0 1 0 12.6 11.2L10 9.7A2.5 2.7 0 1 1 10 6.3Z" fill="#FF0000" stroke="#000" stroke-linejoin="round"/><path d="M3.6 6.2A4 4 0 0 1 6.2 3.8" stroke="#fff" stroke-width="1" fill="none"/></svg>
<div class="t" style="left:25.9px;top:611px;letter-spacing:-.15px">idebar.<span class="ext">cpp</span></div>
<svg style="left:8px;top:627px" width="16" height="16" viewBox="0 0 16 16"><circle cx="7.3" cy="8" r="3" fill="#fff"/><path d="M12.6 4.8A5.4 5.7 0 1 0 12.6 11.2L10 9.7A2.5 2.7 0 1 1 10 6.3Z" fill="#FF0000" stroke="#000" stroke-linejoin="round"/><path d="M3.6 6.2A4 4 0 0 1 6.2 3.8" stroke="#fff" stroke-width="1" fill="none"/></svg>
<div class="t" style="left:25.9px;top:627px;letter-spacing:-.15px">idewin.<span class="ext">cpp</span></div>
<svg style="left:8px;top:643px" width="16" height="16" viewBox="0 0 16 16"><circle cx="7.3" cy="8" r="3" fill="#fff"/><path d="M12.6 4.8A5.4 5.7 0 1 0 12.6 11.2L10 9.7A2.5 2.7 0 1 1 10 6.3Z" fill="#FF0000" stroke="#000" stroke-linejoin="round"/><path d="M3.6 6.2A4 4 0 0 1 6.2 3.8" stroke="#fff" stroke-width="1" fill="none"/></svg>
<div class="t" style="left:25.9px;top:643px;letter-spacing:-.15px">Help.<span class="ext">cpp</span></div>
<svg style="left:8px;top:659px" width="16" height="16" viewBox="0 0 16 16"><circle cx="7.3" cy="8" r="3" fill="#fff"/><path d="M12.6 4.8A5.4 5.7 0 1 0 12.6 11.2L10 9.7A2.5 2.7 0 1 1 10 6.3Z" fill="#FF0000" stroke="#000" stroke-linejoin="round"/><path d="M3.6 6.2A4 4 0 0 1 6.2 3.8" stroke="#fff" stroke-width="1" fill="none"/></svg>
<div class="t" style="left:25.9px;top:659px;letter-spacing:-.15px">Util.<span class="ext">cpp</span></div>
<svg style="left:8px;top:675px" width="16" height="16" viewBox="0 0 16 16"><circle cx="7.3" cy="8" r="3" fill="#fff"/><path d="M12.6 4.8A5.4 5.7 0 1 0 12.6 11.2L10 9.7A2.5 2.7 0 1 1 10 6.3Z" fill="#FF0000" stroke="#000" stroke-linejoin="round"/><path d="M3.6 6.2A4 4 0 0 1 6.2 3.8" stroke="#fff" stroke-width="1" fill="none"/></svg>
<div class="t" style="left:25.9px;top:675px;letter-spacing:-.15px">Macro.<span class="ext">cpp</span></div>
<svg style="left:8px;top:691px" width="16" height="16" viewBox="0 0 16 16"><circle cx="7.3" cy="8" r="3" fill="#fff"/><path d="M12.6 4.8A5.4 5.7 0 1 0 12.6 11.2L10 9.7A2.5 2.7 0 1 1 10 6.3Z" fill="#FF0000" stroke="#000" stroke-linejoin="round"/><path d="M3.6 6.2A4 4 0 0 1 6.2 3.8" stroke="#fff" stroke-width="1" fill="none"/></svg>
<div class="t" style="left:25.9px;top:691px;letter-spacing:-.15px">Calc.<span class="ext">cpp</span></div>
<svg style="left:110px;top:291px" width="16" height="16" viewBox="0 0 16 16"><path d="M0.7 2.6L14.3 8.5L0.7 14.4Z" fill="#00FFFF" stroke="#000" stroke-width="1.3" stroke-linejoin="round"/><path d="M1.6 4.2L11.4 8.5L1.6 12.8" fill="none" stroke="#F0D8D0" stroke-width="0.7"/><rect x="3" y="8" width="4" height="1" fill="#800000"/></svg>
<div class="t" style="left:127.6px;top:291px;letter-spacing:-.15px"><span class="grp">Compile</span></div>
<svg style="left:110px;top:307px" width="16" height="16" viewBox="0 0 16 16"><circle cx="7.3" cy="8" r="3" fill="#fff"/><path d="M12.6 4.8A5.4 5.7 0 1 0 12.6 11.2L10 9.7A2.5 2.7 0 1 1 10 6.3Z" fill="#FF0000" stroke="#000" stroke-linejoin="round"/><path d="M3.6 6.2A4 4 0 0 1 6.2 3.8" stroke="#fff" stroke-width="1" fill="none"/></svg>
<div class="t" style="left:127.6px;top:307px;letter-spacing:-.15px">Methods.<span class="ext">cpp</span></div>
<svg style="left:110px;top:323px" width="16" height="16" viewBox="0 0 16 16"><circle cx="7.3" cy="8" r="3" fill="#fff"/><path d="M12.6 4.8A5.4 5.7 0 1 0 12.6 11.2L10 9.7A2.5 2.7 0 1 1 10 6.3Z" fill="#FF0000" stroke="#000" stroke-linejoin="round"/><path d="M3.6 6.2A4 4 0 0 1 6.2 3.8" stroke="#fff" stroke-width="1" fill="none"/></svg>
<div class="t" style="left:127.6px;top:323px;letter-spacing:-.15px">AutoSetup.<span class="ext">cpp</span></div>
<svg style="left:110px;top:339px" width="16" height="16" viewBox="0 0 16 16"><circle cx="7.3" cy="8" r="3" fill="#fff"/><path d="M12.6 4.8A5.4 5.7 0 1 0 12.6 11.2L10 9.7A2.5 2.7 0 1 1 10 6.3Z" fill="#FF0000" stroke="#000" stroke-linejoin="round"/><path d="M3.6 6.2A4 4 0 0 1 6.2 3.8" stroke="#fff" stroke-width="1" fill="none"/></svg>
<div class="t" style="left:127.6px;top:339px;letter-spacing:-.15px">OutputMode.<span class="ext">cpp</span></div>
<svg style="left:110px;top:355px" width="16" height="16" viewBox="0 0 16 16"><circle cx="7.3" cy="8" r="3" fill="#fff"/><path d="M12.6 4.8A5.4 5.7 0 1 0 12.6 11.2L10 9.7A2.5 2.7 0 1 1 10 6.3Z" fill="#FF0000" stroke="#000" stroke-linejoin="round"/><path d="M3.6 6.2A4 4 0 0 1 6.2 3.8" stroke="#fff" stroke-width="1" fill="none"/></svg>
<div class="t" style="left:127.6px;top:355px;letter-spacing:-.15px">Host.<span class="ext">cpp</span></div>
<svg style="left:110px;top:371px" width="16" height="16" viewBox="0 0 16 16"><circle cx="7.3" cy="8" r="3" fill="#fff"/><path d="M12.6 4.8A5.4 5.7 0 1 0 12.6 11.2L10 9.7A2.5 2.7 0 1 1 10 6.3Z" fill="#FF0000" stroke="#000" stroke-linejoin="round"/><path d="M3.6 6.2A4 4 0 0 1 6.2 3.8" stroke="#fff" stroke-width="1" fill="none"/></svg>
<div class="t" style="left:127.6px;top:371px;letter-spacing:-.15px">Build.<span class="ext">cpp</span></div>
<svg style="left:110px;top:387px" width="16" height="16" viewBox="0 0 16 16"><circle cx="7.3" cy="8" r="3" fill="#fff"/><path d="M12.6 4.8A5.4 5.7 0 1 0 12.6 11.2L10 9.7A2.5 2.7 0 1 1 10 6.3Z" fill="#FF0000" stroke="#000" stroke-linejoin="round"/><path d="M3.6 6.2A4 4 0 0 1 6.2 3.8" stroke="#fff" stroke-width="1" fill="none"/></svg>
<div class="t" style="left:127.6px;top:387px;letter-spacing:-.15px">Debug.<span class="ext">cpp</span></div>
<svg style="left:110px;top:403px" width="16" height="16" viewBox="0 0 16 16"><path d="M0.7 2.6L14.3 8.5L0.7 14.4Z" fill="#00FFFF" stroke="#000" stroke-width="1.3" stroke-linejoin="round"/><path d="M1.6 4.2L11.4 8.5L1.6 12.8" fill="none" stroke="#F0D8D0" stroke-width="0.7"/><rect x="3" y="8" width="4" height="1" fill="#800000"/></svg>
<div class="t" style="left:127.6px;top:403px;letter-spacing:-.15px"><span class="grp">Resources</span></div>
<svg style="left:110px;top:419px" width="16" height="16" viewBox="0 0 16 16"><path d="M9.2 11.5L15.3 1.2V11.5Z" fill="#00C890" stroke="#000" stroke-width="1.3"/><path d="M12.5 9L14 6V9Z" fill="#000"/><path d="M1.5 4L3.5 8M5.5 2.5V8M8.5 3L7 8M3 5L5 8M7 4.5L6 8" stroke="#000" stroke-width="0.9" fill="none"/><rect x="0.5" y="0.3" width="2" height="1.6" fill="#F00"/><rect x="5" y="0.2" width="1.6" height="2" fill="#F0F"/><path d="M8 2.2L9.6 0.4" stroke="#FF0" stroke-width="1.4"/><path d="M0.8 5.5V12.5A4 3 0 0 0 9.2 12.5V5.5" fill="#fff" stroke="#000"/><circle cx="5" cy="11" r="3.5" fill="#FFFF00"/><rect x="3.5" y="10" width="1" height="1" fill="#000"/><rect x="5.8" y="10" width="1" height="1" fill="#000"/><rect x="3.5" y="12.3" width="3.3" height="0.9" fill="#000"/></svg>
<div class="t" style="left:127.6px;top:419px;letter-spacing:-.15px">ide.<span class="ext">iml</span></div>
<svg style="left:110px;top:435px" width="16" height="16" viewBox="0 0 16 16" shape-rendering="crispEdges"><rect x="1" y="3" width="14" height="11" fill="#A0A0A0"/><rect x="2" y="5" width="12" height="8" fill="#C0C0C0"/><rect x="2" y="3" width="12" height="1" fill="#0000E0"/><rect x="3" y="6" width="7" height="1" fill="#fff"/><rect x="3" y="7" width="10" height="1" fill="#909090"/><path d="M4 9H7V12H4Z M9 9H12V12H9Z" fill="#808080"/><path d="M5 10H6V11H5Z M10 10H11V11H10Z" fill="#C0C0C0"/></svg>
<div class="t" style="left:127.6px;top:435px;letter-spacing:-.15px">ide.<span class="ext">lay</span></div>
<svg style="left:110px;top:451px" width="16" height="16" viewBox="0 0 16 16"><path d="M4.5 2.5H9.5L12.5 5.5V13.5H4.5Z" fill="#C0C0C0" stroke="#000"/><path d="M9.5 2.5V5.5H12.5Z" fill="#fff" stroke="#000" stroke-linejoin="round"/></svg>
<div class="t" style="left:127.6px;top:451px;letter-spacing:-.15px">ide.<span class="ext">rc</span></div>
<svg style="left:110px;top:467px" width="16" height="16" viewBox="0 0 16 16"><path d="M4.5 2.5H9.5L12.5 5.5V13.5H4.5Z" fill="#C0C0C0" stroke="#000"/><path d="M9.5 2.5V5.5H12.5Z" fill="#fff" stroke="#000" stroke-linejoin="round"/></svg>
<div class="t" style="left:127.6px;top:467px;letter-spacing:-.15px">Makefile</div>
<svg style="left:110px;top:483px" width="16" height="16" viewBox="0 0 16 16"><path d="M0.7 2.6L14.3 8.5L0.7 14.4Z" fill="#00FFFF" stroke="#000" stroke-width="1.3" stroke-linejoin="round"/><path d="M1.6 4.2L11.4 8.5L1.6 12.8" fill="none" stroke="#F0D8D0" stroke-width="0.7"/><rect x="3" y="8" width="4" height="1" fill="#800000"/></svg>
<div class="t" style="left:127.6px;top:483px;letter-spacing:-.15px"><span class="grp">Info</span></div>
<svg style="left:110px;top:499px" width="16" height="16" viewBox="0 0 16 16"><path d="M4.5 2.5H9.5L12.5 5.5V13.5H4.5Z" fill="#C0C0C0" stroke="#000"/><path d="M9.5 2.5V5.5H12.5Z" fill="#fff" stroke="#000" stroke-linejoin="round"/></svg>
<div class="t" style="left:127.6px;top:499px;letter-spacing:-.55px">COPYING</div>
<svg style="left:110px;top:515px" width="16" height="16" viewBox="0 0 16 16"><path d="M4.5 2.5H9.5L12.5 5.5V13.5H4.5Z" fill="#C0C0C0" stroke="#000"/><path d="M9.5 2.5V5.5H12.5Z" fill="#fff" stroke="#000" stroke-linejoin="round"/></svg>
<div class="t" style="left:127.6px;top:515px;letter-spacing:-.55px">COPYING-PLAIN</div>
<svg style="left:110px;top:531px" width="16" height="16" viewBox="0 0 16 16"><path d="M4.5 2.5H9.5L12.5 5.5V13.5H4.5Z" fill="#C0C0C0" stroke="#000"/><path d="M9.5 2.5V5.5H12.5Z" fill="#fff" stroke="#000" stroke-linejoin="round"/></svg>
<div class="t" style="left:127.6px;top:531px;letter-spacing:-.55px">AUTHORS</div>
<div class="panel" style="left:216px;top:57px;width:150px;height:225px"></div>
<div class="a" style="left:218px;top:98px;width:129px;height:13px;background:#ECE9D8"></div>
<div class="m" style="left:224.3px;top:60px;transform:scaleX(.895)">ListLayout</div>
<div class="m" style="left:224.3px;top:73px;transform:scaleX(.895)">ConfigLayout</div>
<div class="m" style="left:224.3px;top:86px;transform:scaleX(.895)">BaseSetupLayout</div>
<div class="m" style="left:224.3px;top:99px;transform:scaleX(.895)">ConfLayout</div>
<div class="m" style="left:224.3px;top:112px;transform:scaleX(.895)">CustomLayout</div>
<div class="m" style="left:224.3px;top:125px;transform:scaleX(.895)">RunLayout</div>
<div class="m" style="left:224.3px;top:138px;transform:scaleX(.895)">FindInFilesLayout</div>
<div class="m" style="left:224.3px;top:151px;transform:scaleX(.895)">BatchBuildLayout</div>
<div class="m" style="left:224.3px;top:164px;transform:scaleX(.895)">FindFileLayout</div>
<div class="m" style="left:224.3px;top:177px;transform:scaleX(.895)">UppLayout</div>
<div class="m" style="left:224.3px;top:190px;transform:scaleX(.895)">NewPackageLayout</div>
<div class="m" style="left:224.3px;top:203px;transform:scaleX(.895)">FileFormatLayout</div>
<div class="m" style="left:224.3px;top:216px;transform:scaleX(.895)">CharsetLayout</div>
<div class="m" style="left:224.3px;top:229px;transform:scaleX(.895)">StatisticsLayout</div>
<div class="m" style="left:224.3px;top:242px;transform:scaleX(.895)">LngIdentLayout</div>
<div class="m" style="left:224.3px;top:255px;transform:scaleX(.895)">LngIdentNameLayout</div>
<div class="m" style="left:224.3px;top:268px;transform:scaleX(.895)">LngIdentRemoveLayout</div>
<div class="sb" style="left:347px;top:59px;height:221px">
<div class="sbtn" style="top:1px"><svg width="13" height="13" viewBox="0 0 13 13" style="left:0;top:0"><path d="M2.5 8L6.5 4L10.5 8" fill="none" stroke="#4D6185" stroke-width="2"/></svg></div>
<div class="sthumb" style="top:17px;height:94px"><svg width="13" height="9" viewBox="0 0 13 9" shape-rendering="crispEdges" style="left:0;top:42px"><path d="M2 0H9V1H2Z M2 2H9V3H2Z M2 4H9V5H2Z M2 6H9V7H2Z" fill="#fff"/><path d="M3 1H10V2H3Z M3 3H10V4H3Z M3 5H10V6H3Z M3 7H10V8H3Z" fill="#2B5FD9"/></svg></div>
<div class="sbtn" style="top:205px"><svg width="13" height="13" viewBox="0 0 13 13" style="left:0;top:0"><path d="M2.5 5L6.5 9L10.5 5" fill="none" stroke="#4D6185" stroke-width="2"/></svg></div></div>
<div class="panel" style="left:216px;top:286px;width:150px;height:216px"></div>
<div class="a" style="left:218px;top:288px;width:128px;height:15px;background:#ECE9D8"></div>
<div class="a" style="left:218px;top:303px;width:129px;height:2px;background:#ACA899"></div>
<div class="a" style="left:276px;top:289px;width:1px;height:13px;background:#ACA899"></div>
<div class="a" style="left:277px;top:289px;width:1px;height:13px;background:#fff"></div>
<div class="a" style="left:346px;top:288px;width:1px;height:157px;background:#ACA899"></div>
<div class="m" style="left:225px;top:290px;">Type</div>
<div class="m" style="left:283.5px;top:290px;">Var / lbl</div>
<div class="a" style="left:218px;top:318px;width:128px;height:1px;background:#C8C5B8"></div>
<div class="m" style="left:225.6px;top:306px;">LabelBox</div>
<div class="a" style="left:285.5px;top:306px;width:60px;height:13px;overflow:hidden"><div class="m" style="left:0;top:0;color:#00A000">"Target"</div></div>
<div class="a" style="left:218px;top:332px;width:128px;height:1px;background:#C8C5B8"></div>
<div class="m" style="left:225.6px;top:320px;">Switch</div>
<div class="a" style="left:285.5px;top:320px;width:60px;height:13px;overflow:hidden"><div class="m" style="left:0;top:0;color:#000">dll</div></div>
<div class="a" style="left:218px;top:346px;width:128px;height:1px;background:#C8C5B8"></div>
<div class="m" style="left:225.6px;top:334px;">LabelBox</div>
<div class="a" style="left:285.5px;top:334px;width:60px;height:13px;overflow:hidden"><div class="m" style="left:0;top:0;color:#00A000">"App style"</div></div>
<div class="a" style="left:218px;top:347px;width:128px;height:13px;background:#ECE9D8"></div>
<div class="a" style="left:218px;top:360px;width:128px;height:1px;background:#C8C5B8"></div>
<div class="m" style="left:225.6px;top:348px;">Switch</div>
<div class="a" style="left:285.5px;top:348px;width:60px;height:13px;overflow:hidden"><div class="m" style="left:0;top:0;color:#000">gui</div></div>
<div class="a" style="left:218px;top:374px;width:128px;height:1px;background:#C8C5B8"></div>
<div class="m" style="left:225.6px;top:362px;">LabelBox</div>
<div class="a" style="left:285.5px;top:362px;width:60px;height:13px;overflow:hidden"><div class="m" style="left:0;top:0;color:#00A000">"Thread model"</div></div>
<div class="a" style="left:218px;top:388px;width:128px;height:1px;background:#C8C5B8"></div>
<div class="m" style="left:225.6px;top:376px;">Switch</div>
<div class="a" style="left:285.5px;top:376px;width:60px;height:13px;overflow:hidden"><div class="m" style="left:0;top:0;color:#000">mt</div></div>
<div class="a" style="left:218px;top:402px;width:128px;height:1px;background:#C8C5B8"></div>
<div class="m" style="left:225.6px;top:390px;">Label</div>
<div class="a" style="left:285.5px;top:390px;width:60px;height:13px;overflow:hidden"><div class="m" style="left:0;top:0;color:#00A000">"&amp;Other flags"</div></div>
<div class="a" style="left:218px;top:416px;width:128px;height:1px;background:#C8C5B8"></div>
<div class="m" style="left:225.6px;top:404px;">EditString</div>
<div class="a" style="left:285.5px;top:404px;width:60px;height:13px;overflow:hidden"><div class="m" style="left:0;top:0;color:#000">other</div></div>
<div class="a" style="left:218px;top:430px;width:128px;height:1px;background:#C8C5B8"></div>
<div class="m" style="left:225.6px;top:418px;">Button</div>
<div class="a" style="left:285.5px;top:418px;width:60px;height:13px;overflow:hidden"><div class="m" style="left:0;top:0;color:#000">ok</div></div>
<div class="a" style="left:218px;top:444px;width:128px;height:1px;background:#C8C5B8"></div>
<div class="m" style="left:225.6px;top:432px;">Button</div>
<div class="a" style="left:285.5px;top:432px;width:60px;height:13px;overflow:hidden"><div class="m" style="left:0;top:0;color:#000">cancel</div></div>
<div class="a" style="left:276px;top:305px;width:1px;height:140px;background:#C8C5B8"></div>
<div class="a" style="left:347px;top:288px;width:17px;height:17px;background:#ECE9D8"></div>
<div class="a" style="left:347px;top:483px;width:17px;height:17px;background:#ECE9D8"></div>
<div class="sb gray" style="left:347px;top:288px;height:212px">
<div class="sbtn" style="top:1px"><svg width="13" height="13" viewBox="0 0 13 13" style="left:0;top:0"><path d="M2.5 8L6.5 4L10.5 8" fill="none" stroke="#4D6185" stroke-width="2"/></svg></div>
<div class="sbtn" style="top:196px"><svg width="13" height="13" viewBox="0 0 13 13" style="left:0;top:0"><path d="M2.5 5L6.5 9L10.5 5" fill="none" stroke="#4D6185" stroke-width="2"/></svg></div></div>
<div class="combo" style="left:218px;top:506px;width:62px;height:19px">
<div class="cbtn" style="right:1px;top:1px;width:15px;height:15px"><svg width="9" height="6" viewBox="0 0 9 6" style="left:2px;top:3px"><path d="M1 1L4.5 4.5L8 1" fill="none" stroke="#4D6185" stroke-width="2"/></svg></div>
<div class="a" style="left:2.3px;top:4px;overflow:hidden;width:41.7px;height:15px"><div class="m" style="left:0;top:0">Switch</div></div></div>
<div class="combo" style="left:284px;top:506px;width:63px;height:19px"><div class="m" style="left:2.8px;top:4px">gui</div></div>
<div class="sb" style="left:349px;top:506px;height:214px">
<div class="sbtn" style="top:1px"><svg width="13" height="13" viewBox="0 0 13 13" style="left:0;top:0"><path d="M2.5 8L6.5 4L10.5 8" fill="none" stroke="#4D6185" stroke-width="2"/></svg></div>
<div class="sthumb" style="top:17px;height:100px"><svg width="13" height="9" viewBox="0 0 13 9" shape-rendering="crispEdges" style="left:0;top:45px"><path d="M2 0H9V1H2Z M2 2H9V3H2Z M2 4H9V5H2Z M2 6H9V7H2Z" fill="#fff"/><path d="M3 1H10V2H3Z M3 3H10V4H3Z M3 5H10V6H3Z M3 7H10V8H3Z" fill="#2B5FD9"/></svg></div>
<div class="sbtn" style="top:198px"><svg width="13" height="13" viewBox="0 0 13 13" style="left:0;top:0"><path d="M2.5 5L6.5 9L10.5 5" fill="none" stroke="#4D6185" stroke-width="2"/></svg></div></div>
<div class="a" style="left:217px;top:529px;width:131px;height:191px;background:#E0E0E0"></div>
<div class="t" style="left:218.8px;top:534px;font-weight:bold;letter-spacing:.3px">SetLabel</div>
<div class="xbtn" style="left:331px;top:533px;width:15px;height:15px"><div class="a" style="left:1.5px;top:0px;font-size:11px;line-height:13px;font-weight:bold;letter-spacing:-.4px;white-space:nowrap">...</div></div>
<div class="panel" style="left:218px;top:551px;width:128px;height:120px"></div>
<div class="m" style="left:222.9px;top:554px;">Console</div>
<div class="m" style="left:222.9px;top:567.5px;">GUI</div>
<div class="a" style="left:222px;top:580px;width:121px;height:1px;background:#ACA899"></div>
<div class="a" style="left:221px;top:650px;width:86px;height:19px;border:1px solid #7F9DB9;background:#ECE9D8"></div>
<div class="xbtn" style="left:307px;top:651px;width:17px;height:17px"><div class="a" style="left:1.2px;top:0.5px;font-family:'Liberation Mono',monospace;font-size:12px;line-height:14px;white-space:nowrap;transform:scaleX(.56);transform-origin:0 0;-webkit-text-stroke:.3px">Ctx</div></div>
<div class="xbtn" style="left:325.5px;top:651px;width:17px;height:17px"><div class="a" style="left:2.6px;top:0.5px;font-family:'Liberation Mono',monospace;font-size:12px;line-height:14px;white-space:nowrap;transform:scaleX(.7);transform-origin:0 0;-webkit-text-stroke:.3px">Id</div></div>
<div class="a" style="left:217px;top:675px;width:131px;height:1px;background:#000"></div>
<div class="m" style="left:218.3px;top:681px;">SetFont</div>
<div class="combo" style="left:317px;top:678px;width:29px;height:19px"><div class="m" style="left:4px;top:2.5px">StdF</div></div>
<div class="a" style="left:217px;top:699px;width:131px;height:1px;background:#000"></div>
<div class="m" style="left:218.3px;top:705px;">SetEditable</div>
<div class="a" style="left:317px;top:704px;width:13px;height:13px;border:1px solid #1C5180;background:#fff"><svg width="11" height="11" style="left:0;top:0"><path d="M2 5L4.5 7.5L9 2.5" fill="none" stroke="#21A121" stroke-width="2"/></svg></div>
<div class="a" style="left:370px;top:57px;width:1px;height:82px;background:#ACA899"></div>
<div class="a" style="left:371px;top:57px;width:1px;height:82px;background:#fff"></div>
<div class="a" style="left:371px;top:140px;width:1px;height:580px;background:#000"></div>
<div class="hsep" style="left:372px;top:83px;width:586px"></div><div class="hsep" style="left:372px;top:111px;width:586px"></div>
<div class="a" style="left:370px;top:139px;width:588px;height:1px;background:#ACA899"></div>
<div class="a" style="left:372px;top:140px;width:586px;height:580px;background:#fff;border-top:1px solid #000"></div>
<div class="m" style="left:671.5px;top:64px;transform:scaleX(.892)">(344, 120): [124, 16] - [194, 50] : (70, 34) - {150, 70}</div>
<svg style="left:337px;top:34px" width="18" height="16" viewBox="0 0 18 16"><path d="M1.5 5.5H5.5L6.5 6.5H11.5V9.5H5L1.5 14.5Z" fill="#FFFF00" stroke="#000"/><path d="M1.5 14.5L5 9.5H16.5L12.5 14.5Z" fill="#808000" stroke="#000"/><path d="M9 3.5Q12 0.8 15 4.2" fill="none" stroke="#000"/><path d="M16.4 2.2V6H12.6Z" fill="#000"/></svg>
<svg style="left:361px;top:36px" width="14" height="14" viewBox="0 0 14 14"><path d="M0.5 0.5H13.5V13.5H1.5L0.5 12.5Z" fill="#0000FF" stroke="#000"/><rect x="3" y="1" width="8" height="6" fill="#fff"/><rect x="3" y="9" width="8" height="4.5" fill="#000"/><rect x="8.5" y="10" width="1.8" height="3" fill="#fff"/><rect x="12" y="1.5" width="1" height="1" fill="#fff"/></svg>
<svg style="left:641px;top:35px" width="17" height="14" viewBox="0 0 17 14"><path d="M1.5 5L8 1.5L15.5 4.5V9L9.5 12.5L1.5 10Z" fill="#C8F0D0" stroke="#000"/><path d="M1.5 6L7 4.5L10.5 6.5V11.5L6 12.5L1.5 10Z" fill="#FFC0C8" stroke="#000" stroke-width=".8"/><path d="M7 9H9.5V12L7 12.5Z" fill="#E00000"/><path d="M12 9.5L15 8V10.5L12 12Z" fill="#00D000"/></svg>
<svg style="left:663px;top:34px" width="18" height="18" viewBox="0 0 18 18"><path d="M1.5 4L6 1.5L10.5 3.5V7L6 9.5L1.5 7.5Z" fill="#C8F0D0" stroke="#000" stroke-width=".9"/><path d="M6 6.5L10.5 4.5V7L6 9.5Z" fill="#00D000"/><path d="M8 8.5L13 6L17.5 8V12.5L12.5 15L8 13Z" fill="#C8C8F8" stroke="#000" stroke-width=".9"/><path d="M12 10.5L17.5 8V12.5L12 15.5Z" fill="#0000E0"/><path d="M1.5 11L6 8.5L10.5 10.5V14.5L6 17L1.5 15Z" fill="#FFC0C8" stroke="#000" stroke-width=".9"/><path d="M5.5 12.5L10.5 10.5V14.5L5.5 17Z" fill="#E00000"/></svg>
<svg style="left:694px;top:35px" width="17" height="16" viewBox="0 0 17 16"><rect x="0.5" y="0.5" width="9" height="7" fill="#fff" stroke="#000"/><path d="M1 2.5H9M1 4.5H9M1 6.5H9" stroke="#E00000"/><rect x="1" y="1" width="4" height="3" fill="#0000C0"/><path d="M1.5 1.5H4.5M1.5 3.2H4.5" stroke="#FFFF00" stroke-width=".8" stroke-dasharray="1 1"/><rect x="3.5" y="4.5" width="9" height="7" fill="#0000E0" stroke="#000"/><circle cx="8" cy="8" r="2.3" fill="none" stroke="#FFFF00" stroke-dasharray="1 1"/><rect x="6.5" y="8.5" width="9" height="7" fill="#fff" stroke="#000"/><rect x="7" y="12" width="8" height="3" fill="#E00000"/><path d="M7 9V15L11 12Z" fill="#0000C0"/></svg>
<svg style="left:724px;top:35px" width="16" height="15" viewBox="0 0 16 15"><rect x="1" y="6" width="14" height="8" fill="#fff"/><path d="M0.5 5V14.5H15.5V5" fill="none" stroke="#000"/><path d="M2.5 9.5H14M2.5 11.5H14M2.5 7.5H14" stroke="#000" stroke-dasharray="1 1.4"/><path d="M2 1.5H14M3 3.5H13" stroke="#0000FF" stroke-dasharray="1 1.5"/><path d="M4.5 2V7M11.5 2V7" stroke="#000080" stroke-width="1.6"/><path d="M2 5.5H7L4.5 8.5Z M9 5.5H14L11.5 8.5Z" fill="#000080"/></svg>
<svg style="left:745px;top:35px" width="18" height="16" viewBox="0 0 18 16"><circle cx="6.5" cy="9.8" r="5.2" fill="#000"/><path d="M9.5 6Q12 0.5 14.5 2.5V4.5" fill="none" stroke="#000"/><rect x="13.5" y="5" width="2" height="2" fill="#FFFF00"/><rect x="14" y="4.5" width="1.5" height="1" fill="#F00"/><rect x="13" y="6" width="1" height="1" fill="#F00"/></svg>
<svg style="left:768px;top:35px" width="16" height="16" viewBox="0 0 16 16"><circle cx="7.3" cy="8" r="3" fill="#fff"/><path d="M12.6 4.8A5.4 5.7 0 1 0 12.6 11.2L10 9.7A2.5 2.7 0 1 1 10 6.3Z" fill="#FF0000" stroke="#000" stroke-linejoin="round"/><path d="M3.6 6.2A4 4 0 0 1 6.2 3.8" stroke="#fff" stroke-width="1" fill="none"/></svg>
<svg style="left:790px;top:35px" width="16" height="16" viewBox="0 0 16 16" shape-rendering="crispEdges"><path d="M4 2H6V14H4Z M8 2H10V14H8Z M2 5H12V7H2Z M2 9H12V11H2Z" fill="#0000E0"/></svg>
<svg style="left:819px;top:35px" width="18" height="15" viewBox="0 0 18 15"><path d="M6.5 1.5L12 7.5L6.5 13.5M12 7.5H17" fill="none" stroke="#000" stroke-width="2.6"/><path d="M6.5 1.5L12 7.5L6.5 13.5M12 7.5H16.5" fill="none" stroke="#FFFF00" stroke-width="1"/></svg>
<div class="t" style="left:819.5px;top:35px;font-weight:bold;font-size:12px;color:#800080">?</div>
<svg style="left:380px;top:63px" width="11" height="14" viewBox="0 0 11 14"><path d="M3 0.5L6.5 8.5M8 0.5L4.5 8.5" stroke="#000" stroke-width="1.3" fill="none"/><circle cx="2.5" cy="10.8" r="2" fill="none" stroke="#0000C0" stroke-width="1.1"/><circle cx="8.5" cy="10.8" r="2" fill="none" stroke="#0000C0" stroke-width="1.1"/></svg>
<svg style="left:400px;top:63px" width="16" height="13" viewBox="0 0 16 13"><path d="M0.5 0.5H5.5L8.5 3.5V9.5H0.5Z" fill="#fff" stroke="#000"/><path d="M2 3.5H5M2 5.5H7M2 7.5H7" stroke="#000"/><path d="M6.5 3.5H11.5L14.5 6.5V12.5H6.5Z" fill="#fff" stroke="#000080"/><path d="M8 6.5H11M8 8.5H13M8 10.5H13" stroke="#000"/></svg>
<svg style="left:422px;top:63px" width="15" height="14" viewBox="0 0 15 14"><rect x="0.5" y="1.5" width="12" height="12" rx="1" fill="#808040" stroke="#000"/><path d="M4 2.5L6.5 0.5L9 2.5Z" fill="#FFFF00" stroke="#404000" stroke-width=".6"/><rect x="3.5" y="2.5" width="6" height="1" fill="#000"/><path d="M6.5 6.5H12L14.5 9V13.5H6.5Z" fill="#fff" stroke="#000080"/><path d="M8 9.5H12M8 11.5H13" stroke="#000080"/></svg>
<svg style="left:445px;top:63px" width="14" height="14" viewBox="0 0 14 14"><path d="M1.5 1.5L12 12.5M12.5 1L1.5 11.5" stroke="#800000" stroke-width="2.2" stroke-linecap="round"/></svg>
<svg style="left:467px;top:63px" width="15" height="14" viewBox="0 0 15 14"><rect x="0.5" y="0.5" width="9" height="5" fill="#C8C8C8" stroke="#000" stroke-width="1.1"/><rect x="4.5" y="8.5" width="10" height="5" fill="#C8C8C8" stroke="#000" stroke-width="1.1"/><path d="M2.5 1.5L10.5 9.5" stroke="#0000FF" stroke-width="1.4"/><path d="M12.5 11.5L8 10.5L11.5 7Z" fill="#0000FF"/></svg>
<svg style="left:488px;top:63px" width="16" height="13" viewBox="0 0 16 13"><path d="M0.5 0.5H5.5L8.5 3.5V9.5H0.5Z" fill="#fff" stroke="#800080"/><path d="M2 3.5H5M2 5.5H7M2 7.5H7" stroke="#F00"/><path d="M6.5 3.5H11.5L14.5 6.5V12.5H6.5Z" fill="#fff" stroke="#000080"/><path d="M8 6.5H11M8 8.5H13M8 10.5H13" stroke="#000"/></svg>
<div class="a" style="left:510px;top:59px;width:1px;height:22px;background:#ACA899"></div>
<svg style="left:519px;top:65px" width="15" height="11" viewBox="0 0 15 11"><g transform="translate(1,1)"><path d="M4 6Q8 0.5 11.5 4.5Q13 7 10.5 9" fill="none" stroke="#fff" stroke-width="1.3"/><path d="M0.5 3V8.5H6Z" fill="#fff"/></g><path d="M4 6Q8 0.5 11.5 4.5Q13 7 10.5 9" fill="none" stroke="#ACA899" stroke-width="1.3"/><path d="M0.5 3V8.5H6Z" fill="#ACA899"/></svg>
<svg style="left:541px;top:65px" width="15" height="11" viewBox="0 0 15 11"><g transform="translate(1,1)"><path d="M10 6Q6 0.5 2.5 4.5Q1 7 3.5 9" fill="none" stroke="#fff" stroke-width="1.3"/><path d="M13.5 3V8.5H8Z" fill="#fff"/></g><path d="M10 6Q6 0.5 2.5 4.5Q1 7 3.5 9" fill="none" stroke="#ACA899" stroke-width="1.3"/><path d="M13.5 3V8.5H8Z" fill="#ACA899"/></svg>
<div class="a" style="left:562px;top:59px;width:1px;height:22px;background:#ACA899"></div>
<svg style="left:571px;top:62px" width="16" height="16" viewBox="0 0 16 16"><path d="M0 4H4V7H0Z M5 4H9V7H5Z M0 12H4V15H0Z M5 12H9V15H5Z" fill="#808080"/><path d="M0.5 10.5L2 8.5L3 10.5L4.5 8.5M5 10.5L6.5 8.5L7.5 10.5L9 8.5" stroke="#000" stroke-width="1.2" fill="none"/><path d="M10 9.5H13.5V2.5" fill="none" stroke="#0000FF" stroke-width="1.3"/><path d="M13.5 0L10.5 3.5H15Z" fill="#0000FF" transform="rotate(-25 13 2)"/></svg>
<svg style="left:593px;top:62px" width="16" height="16" viewBox="0 0 16 16"><path d="M0 1H9V4H0Z M0 9H9V12H0Z" fill="#808080"/><path d="M0.5 7.5L2 5.5L3 7.5L4.5 5.5M5 7.5L6.5 5.5L7.5 7.5L9 5.5" stroke="#000" stroke-width="1.2" fill="none"/><path d="M10 6.5H13.5V13.5H11" fill="none" stroke="#0000FF" stroke-width="1.3"/><path d="M9 13.5L12.5 10.8V16Z" fill="#0000FF"/></svg>
<div class="a" style="left:614px;top:59px;width:1px;height:22px;background:#ACA899"></div>
<div class="a" style="left:620px;top:59px;width:21px;height:22px;border:1px solid #C5C2B2;border-radius:4px;background:#fff;box-shadow:inset 0 -2px 2px #ECE9D8"></div>
<svg style="left:623px;top:63px" width="13" height="13" viewBox="0 0 13 13" shape-rendering="crispEdges"><rect x="0" y="0" width="1" height="1"/><rect x="0" y="3" width="1" height="1"/><rect x="0" y="6" width="1" height="1"/><rect x="0" y="9" width="1" height="1"/><rect x="0" y="12" width="1" height="1"/><rect x="3" y="0" width="1" height="1"/><rect x="3" y="3" width="1" height="1"/><rect x="3" y="6" width="1" height="1"/><rect x="3" y="9" width="1" height="1"/><rect x="3" y="12" width="1" height="1"/><rect x="6" y="0" width="1" height="1"/><rect x="6" y="3" width="1" height="1"/><rect x="6" y="6" width="1" height="1"/><rect x="6" y="9" width="1" height="1"/><rect x="6" y="12" width="1" height="1"/><rect x="9" y="0" width="1" height="1"/><rect x="9" y="3" width="1" height="1"/><rect x="9" y="6" width="1" height="1"/><rect x="9" y="9" width="1" height="1"/><rect x="9" y="12" width="1" height="1"/><rect x="12" y="0" width="1" height="1"/><rect x="12" y="3" width="1" height="1"/><rect x="12" y="6" width="1" height="1"/><rect x="12" y="9" width="1" height="1"/><rect x="12" y="12" width="1" height="1"/></svg>
<svg style="left:646px;top:64px" width="12" height="12" viewBox="0 0 12 12"><rect x="0.5" y="0.5" width="11" height="11" fill="#F00" stroke="#000"/><path d="M1 1L11 11M11 1L1 11" stroke="#A00000" stroke-width=".8"/></svg>
<div class="a" style="left:666px;top:59px;width:1px;height:22px;background:#ACA899"></div>
<svg style="left:378px;top:90px" width="17" height="14" viewBox="0 0 17 14"><rect x="0.75" y="0.75" width="15" height="12.5" fill="none" stroke="#000" stroke-width="1.5"/><rect x="7" y="2.5" width="3" height="9" fill="#C0C0C0" stroke="#000"/><path d="M1.5 7H6M11 7H15.5" stroke="#0000FF" stroke-width="1.2"/><path d="M6.5 7L4 4.5V9.5Z M10.5 7L13 4.5V9.5Z" fill="#0000FF"/></svg>
<svg style="left:400px;top:90px" width="17" height="14" viewBox="0 0 17 14"><rect x="0.75" y="0.75" width="15" height="12.5" fill="none" stroke="#000" stroke-width="1.5"/><rect x="3.5" y="5.5" width="10" height="3" fill="#C0C0C0" stroke="#000"/><path d="M8.5 1.5V5M8.5 9V12.5" stroke="#0000FF" stroke-width="1.2"/><path d="M8.5 5.2L6 2.8H11Z M8.5 8.8L6 11.2H11Z" fill="#0000FF"/></svg>
<div class="a" style="left:422px;top:87px;width:1px;height:22px;background:#ACA899"></div>
<svg style="left:430px;top:91px" width="16" height="15" viewBox="0 0 16 15"><g transform="translate(1,1)" stroke="#fff" fill="none" stroke-width="1.2"><path d="M0.5 0V14"/><rect x="2.5" y="1.5" width="5" height="4"/><rect x="2.5" y="8.5" width="4" height="4" rx="1.5"/><path d="M15 3.5H9.5M9.5 3.5l2.5 -2.5M9.5 3.5l2.5 2.5"/><path d="M15 10.5H8.5M8.5 10.5l2.5 -2.5M8.5 10.5l2.5 2.5"/></g><g stroke="#A5A18F" fill="none" stroke-width="1.3"><path d="M0.5 0V14"/><rect x="2.5" y="1.5" width="5" height="4"/><rect x="2.5" y="8.5" width="4" height="4" rx="1.5"/><path d="M15 3.5H9.5M9.5 3.5l2.5 -2.5M9.5 3.5l2.5 2.5"/><path d="M15 10.5H8.5M8.5 10.5l2.5 -2.5M8.5 10.5l2.5 2.5"/></g></svg>
<svg style="left:452px;top:91px" width="16" height="15" viewBox="0 0 16 15"><g transform="translate(1,1)" stroke="#fff" fill="none" stroke-width="1.2"><path d="M7.5 0V14"/><rect x="5" y="1.5" width="5" height="4"/><rect x="5.5" y="8.5" width="4" height="4" rx="1.5"/><path d="M0 3.5H4M4 3.5l-2.5 -2.5M4 3.5l-2.5 2.5"/><path d="M15 3.5H11M11 3.5l2.5 -2.5M11 3.5l2.5 2.5"/><path d="M0 10.5H4.5M4.5 10.5l-2.5 -2.5M4.5 10.5l-2.5 2.5"/><path d="M15 10.5H10.5M10.5 10.5l2.5 -2.5M10.5 10.5l2.5 2.5"/></g><g stroke="#A5A18F" fill="none" stroke-width="1.3"><path d="M7.5 0V14"/><rect x="5" y="1.5" width="5" height="4"/><rect x="5.5" y="8.5" width="4" height="4" rx="1.5"/><path d="M0 3.5H4M4 3.5l-2.5 -2.5M4 3.5l-2.5 2.5"/><path d="M15 3.5H11M11 3.5l2.5 -2.5M11 3.5l2.5 2.5"/><path d="M0 10.5H4.5M4.5 10.5l-2.5 -2.5M4.5 10.5l-2.5 2.5"/><path d="M15 10.5H10.5M10.5 10.5l2.5 -2.5M10.5 10.5l2.5 2.5"/></g></svg>
<svg style="left:474px;top:91px" width="16" height="15" viewBox="0 0 16 15"><g transform="translate(1,1)" stroke="#fff" fill="none" stroke-width="1.2"><path d="M14.5 0V14"/><rect x="7.5" y="1.5" width="5" height="4"/><rect x="8.5" y="8.5" width="4" height="4" rx="1.5"/><path d="M0 3.5H5.5M5.5 3.5l-2.5 -2.5M5.5 3.5l-2.5 2.5"/><path d="M0 10.5H6.5M6.5 10.5l-2.5 -2.5M6.5 10.5l-2.5 2.5"/></g><g stroke="#A5A18F" fill="none" stroke-width="1.3"><path d="M14.5 0V14"/><rect x="7.5" y="1.5" width="5" height="4"/><rect x="8.5" y="8.5" width="4" height="4" rx="1.5"/><path d="M0 3.5H5.5M5.5 3.5l-2.5 -2.5M5.5 3.5l-2.5 2.5"/><path d="M0 10.5H6.5M6.5 10.5l-2.5 -2.5M6.5 10.5l-2.5 2.5"/></g></svg>
<div class="a" style="left:496px;top:87px;width:1px;height:22px;background:#ACA899"></div>
<svg style="left:504px;top:90px" width="16" height="15" viewBox="0 0 16 15"><g transform="translate(1,1)" stroke="#fff" fill="none" stroke-width="1.2"><path d="M0 0.5H15"/><rect x="1.5" y="2.5" width="4" height="4" rx="1.5"/><rect x="8.5" y="2.5" width="5" height="4"/><path d="M3.5 14V8M3.5 8l-2.5 2.5M3.5 8l2.5 2.5"/><path d="M11 14V8M11 8l-2.5 2.5M11 8l2.5 2.5"/></g><g stroke="#A5A18F" fill="none" stroke-width="1.3"><path d="M0 0.5H15"/><rect x="1.5" y="2.5" width="4" height="4" rx="1.5"/><rect x="8.5" y="2.5" width="5" height="4"/><path d="M3.5 14V8M3.5 8l-2.5 2.5M3.5 8l2.5 2.5"/><path d="M11 14V8M11 8l-2.5 2.5M11 8l2.5 2.5"/></g></svg>
<svg style="left:527px;top:90px" width="16" height="15" viewBox="0 0 16 15"><g transform="translate(1,1)" stroke="#fff" fill="none" stroke-width="1.2"><path d="M0 7.5H15"/><rect x="1.5" y="5" width="4" height="5" rx="1.5"/><rect x="8.5" y="5" width="5" height="5"/><path d="M3.5 0V4M3.5 4l-2.5 -2.5M3.5 4l2.5 -2.5"/><path d="M3.5 15V11M3.5 11l-2.5 2.5M3.5 11l2.5 2.5"/><path d="M11 0V4M11 4l-2.5 -2.5M11 4l2.5 -2.5"/><path d="M11 15V11M11 11l-2.5 2.5M11 11l2.5 2.5"/></g><g stroke="#A5A18F" fill="none" stroke-width="1.3"><path d="M0 7.5H15"/><rect x="1.5" y="5" width="4" height="5" rx="1.5"/><rect x="8.5" y="5" width="5" height="5"/><path d="M3.5 0V4M3.5 4l-2.5 -2.5M3.5 4l2.5 -2.5"/><path d="M3.5 15V11M3.5 11l-2.5 2.5M3.5 11l2.5 2.5"/><path d="M11 0V4M11 4l-2.5 -2.5M11 4l2.5 -2.5"/><path d="M11 15V11M11 11l-2.5 2.5M11 11l2.5 2.5"/></g></svg>
<svg style="left:548px;top:90px" width="16" height="15" viewBox="0 0 16 15"><g transform="translate(1,1)" stroke="#fff" fill="none" stroke-width="1.2"><path d="M0 14.5H15"/><rect x="1.5" y="8.5" width="4" height="4" rx="1.5"/><rect x="8.5" y="8.5" width="5" height="4"/><path d="M3.5 0V7M3.5 7l-2.5 -2.5M3.5 7l2.5 -2.5"/><path d="M11 0V7M11 7l-2.5 -2.5M11 7l2.5 -2.5"/></g><g stroke="#A5A18F" fill="none" stroke-width="1.3"><path d="M0 14.5H15"/><rect x="1.5" y="8.5" width="4" height="4" rx="1.5"/><rect x="8.5" y="8.5" width="5" height="4"/><path d="M3.5 0V7M3.5 7l-2.5 -2.5M3.5 7l2.5 -2.5"/><path d="M11 0V7M11 7l-2.5 -2.5M11 7l2.5 -2.5"/></g></svg>
<div class="a" style="left:570px;top:91px;font-size:11px;line-height:13px;font-weight:bold;letter-spacing:-.3px;transform:scaleX(.45);transform-origin:0 0;white-space:nowrap">LBL</div>
<svg style="left:579px;top:90px" width="8" height="15" viewBox="0 0 8 15"><path d="M4 1V14M1 7.5H7" stroke="#0000FF" stroke-width="1.4"/><path d="M4 0L0.8 4H7.2Z M4 15L0.8 11H7.2Z" fill="#0000FF"/></svg>
<div class="a" style="left:592px;top:87px;width:1px;height:22px;background:#ACA899"></div>
<svg style="left:600px;top:93px" width="16" height="10" viewBox="0 0 16 10"><g transform="translate(1,1)" stroke="#fff" fill="none" stroke-width="1.2"><rect x="0.5" y="0.5" width="14" height="8"/><path d="M7 4.5H2M2 4.5l2.5 -2.5M2 4.5l2.5 2.5"/><path d="M7 4.5H13M13 4.5l-2.5 -2.5M13 4.5l-2.5 2.5"/></g><g stroke="#A5A18F" fill="none" stroke-width="1.3"><rect x="0.5" y="0.5" width="14" height="8"/><path d="M7 4.5H2M2 4.5l2.5 -2.5M2 4.5l2.5 2.5"/><path d="M7 4.5H13M13 4.5l-2.5 -2.5M13 4.5l-2.5 2.5"/></g></svg>
<svg style="left:625px;top:91px" width="10" height="14" viewBox="0 0 10 14"><g transform="translate(1,1)" stroke="#fff" fill="none" stroke-width="1.2"><rect x="0.5" y="0.5" width="8" height="12"/><path d="M4.5 6V2M4.5 2l-2.5 2.5M4.5 2l2.5 2.5"/><path d="M4.5 6V11M4.5 11l-2.5 -2.5M4.5 11l2.5 -2.5"/></g><g stroke="#A5A18F" fill="none" stroke-width="1.3"><rect x="0.5" y="0.5" width="8" height="12"/><path d="M4.5 6V2M4.5 2l-2.5 2.5M4.5 2l2.5 2.5"/><path d="M4.5 6V11M4.5 11l-2.5 -2.5M4.5 11l2.5 -2.5"/></g></svg>
<svg style="left:644px;top:91px" width="16" height="14" viewBox="0 0 16 14"><g transform="translate(1,1)" stroke="#fff" fill="none" stroke-width="1.2"><rect x="0.5" y="0.5" width="14" height="12"/><path d="M7.5 6.5H2M2 6.5l2.5 -2.5M2 6.5l2.5 2.5"/><path d="M7.5 6.5H13M13 6.5l-2.5 -2.5M13 6.5l-2.5 2.5"/><path d="M7.5 6.5V2M7.5 2l-2.5 2.5M7.5 2l2.5 2.5"/><path d="M7.5 6.5V11M7.5 11l-2.5 -2.5M7.5 11l2.5 -2.5"/></g><g stroke="#A5A18F" fill="none" stroke-width="1.3"><rect x="0.5" y="0.5" width="14" height="12"/><path d="M7.5 6.5H2M2 6.5l2.5 -2.5M2 6.5l2.5 2.5"/><path d="M7.5 6.5H13M13 6.5l-2.5 -2.5M13 6.5l-2.5 2.5"/><path d="M7.5 6.5V2M7.5 2l-2.5 2.5M7.5 2l2.5 2.5"/><path d="M7.5 6.5V11M7.5 11l-2.5 -2.5M7.5 11l2.5 -2.5"/></g></svg>
<div class="a" style="left:666px;top:87px;width:1px;height:22px;background:#ACA899"></div>
<svg style="left:675px;top:91px" width="14" height="13" viewBox="0 0 14 13"><rect x="5.5" y="0.5" width="2" height="12" fill="#F00" stroke="#000"/><path d="M0 6.5H4M13 6.5H9" stroke="#000080" stroke-width="1.2"/><path d="M5 6.5L2.5 4V9Z M8 6.5L10.5 4V9Z" fill="#000080"/></svg>
<svg style="left:697px;top:91px" width="14" height="13" viewBox="0 0 14 13"><rect x="0.5" y="5.5" width="13" height="2" fill="#F00" stroke="#000"/><path d="M7 0V3.5M7 13V9.5" stroke="#000080" stroke-width="1.2"/><path d="M7 4.5L4.5 2H9.5Z M7 8.5L4.5 11H9.5Z" fill="#000080"/></svg>
<div class="a" style="left:718px;top:87px;width:1px;height:22px;background:#ACA899"></div>
<div class="a" style="left:723px;top:87px;width:22px;height:22px;border:1px solid #C5C2B2;border-radius:4px;background:#fff;box-shadow:inset 0 -2px 2px #ECE9D8"></div>
<svg style="left:726px;top:94px" width="17" height="8" viewBox="0 0 17 8"><rect x="3.5" y="2" width="6" height="4" fill="#fff" stroke="#000" stroke-width="1.3"/><path d="M0.5 0.5V7.5M0.5 4H3.5" stroke="#0000FF" stroke-width="1.2" fill="none"/><path d="M12.5 2.5V5.5M14.5 2.5V5.5M16.5 2.5V5.5" stroke="#0000FF" fill="none"/></svg>
<svg style="left:748px;top:94px" width="17" height="8" viewBox="0 0 17 8"><rect x="7" y="2" width="6" height="4" fill="#fff" stroke="#000" stroke-width="1.3"/><path d="M0.5 2.5V5.5M2.5 2.5V5.5M4.5 2.5V5.5" stroke="#0000FF" fill="none"/><path d="M16.5 0.5V7.5M16.5 4H13" stroke="#0000FF" stroke-width="1.2" fill="none"/></svg>
<svg style="left:770px;top:94px" width="17" height="8" viewBox="0 0 17 8"><rect x="3.5" y="2" width="10" height="4" fill="#fff" stroke="#000" stroke-width="1.3"/><path d="M0.5 0.5V7.5M0.5 4H3.5" stroke="#0000FF" stroke-width="1.2" fill="none"/><path d="M16.5 0.5V7.5M16.5 4H13.5" stroke="#0000FF" stroke-width="1.2" fill="none"/></svg>
<svg style="left:792px;top:94px" width="17" height="8" viewBox="0 0 17 8"><rect x="6" y="2" width="5" height="4" fill="#fff" stroke="#000" stroke-width="1.3"/><path d="M0.5 2.5V5.5M2.5 2.5V5.5M4.5 2.5V5.5" stroke="#0000FF" fill="none"/><path d="M12.5 2.5V5.5M14.5 2.5V5.5M16.5 2.5V5.5" stroke="#0000FF" fill="none"/></svg>
<div class="a" style="left:814px;top:87px;width:1px;height:22px;background:#ACA899"></div>
<div class="a" style="left:819px;top:87px;width:22px;height:22px;border:1px solid #C5C2B2;border-radius:4px;background:#fff;box-shadow:inset 0 -2px 2px #ECE9D8"></div>
<svg style="left:825.5px;top:90px" width="8" height="16" viewBox="0 0 8 16"><rect x="2" y="3.5" width="4" height="6" fill="#fff" stroke="#000" stroke-width="1.3"/><path d="M0.5 0.5H7.5M4 0.5V3.5" stroke="#0000FF" stroke-width="1.2" fill="none"/><path d="M2.5 11.5H5.5M2.5 13.5H5.5M2.5 15.5H5.5" stroke="#0000FF" fill="none"/></svg>
<svg style="left:847.5px;top:90px" width="8" height="16" viewBox="0 0 8 16"><rect x="2" y="6" width="4" height="6" fill="#fff" stroke="#000" stroke-width="1.3"/><path d="M2.5 0.5H5.5M2.5 2.5H5.5M2.5 4.5H5.5" stroke="#0000FF" fill="none"/><path d="M0.5 15.5H7.5M4 15.5V12" stroke="#0000FF" stroke-width="1.2" fill="none"/></svg>
<svg style="left:869.5px;top:90px" width="8" height="16" viewBox="0 0 8 16"><rect x="2" y="3" width="4" height="9" fill="#fff" stroke="#000" stroke-width="1.3"/><path d="M0.5 0.5H7.5M4 0.5V3" stroke="#0000FF" stroke-width="1.2" fill="none"/><path d="M0.5 15.5H7.5M4 15.5V12" stroke="#0000FF" stroke-width="1.2" fill="none"/></svg>
<svg style="left:891.5px;top:90px" width="8" height="16" viewBox="0 0 8 16"><rect x="2" y="5" width="4" height="5" fill="#fff" stroke="#000" stroke-width="1.3"/><path d="M2.5 0.5H5.5M2.5 2.5H5.5M2.5 4.5H5.5" stroke="#0000FF" fill="none"/><path d="M2.5 11.5H5.5M2.5 13.5H5.5M2.5 15.5H5.5" stroke="#0000FF" fill="none"/></svg>
<div class="a" style="left:910px;top:87px;width:1px;height:22px;background:#ACA899"></div>
<svg style="left:918px;top:90px" width="16" height="16" viewBox="0 0 16 16"><g stroke="#0000FF" fill="none"><path d="M3 0.5H8M5.5 0.5V3M0.5 3V8M0.5 5.5H3M9.5 4V7M11.5 4V7M13.5 4V7M15.5 4V7M0.5 9V12M2.5 9V12M4.5 9V12M6.5 9V12M15.5 8V13M15.5 10.5H13M8 15.5H13M10.5 15.5V13"/></g><rect x="3.5" y="3.5" width="4" height="4" fill="#fff" stroke="#000" stroke-width="1.3"/><rect x="8.5" y="8.5" width="4" height="4" fill="#fff" stroke="#000" stroke-width="1.3"/></svg>
<svg style="left:377px;top:117px" width="17" height="17" viewBox="0 0 17 17"><g stroke="#0000FF" fill="none" stroke-width="1.2"><path d="M5 1H10M7.5 1V4M1 5V10M1 7.5H4"/></g><g stroke="#0000FF" fill="none"><path d="M12.5 6V9M14.5 6V9M16.5 6V9M6 12.5H9M6 14.5H9M6 16.5H9"/></g><rect x="4.5" y="4.5" width="6" height="6" fill="#fff" stroke="#000" stroke-width="1.4"/></svg>
<div class="a" style="left:956px;top:141px;width:1px;height:578px;background:#ECE9D8"></div>
<div class="a" style="left:372px;top:718px;width:585px;height:1px;background:#ECE9D8"></div>
<div class="a" style="left:372px;top:719px;width:586px;height:1px;background:#fff"></div>
<div class="a" style="left:379px;top:148px;width:346px;height:122px;background:#ECE9D8;border:1px solid #000"></div>
<div class="a" style="left:388px;top:155px;width:103px;height:44px;border:1px solid #ACA899"></div>
<div class="a" style="left:389px;top:156px;width:103px;height:44px;border:1px solid #fff;border-right-color:#fff;border-bottom-color:#fff;clip-path:polygon(0 0,100% 0,100% 100%,0 100%)"></div>
<div class="a" style="left:388px;top:155px;width:103px;height:44px;border:1px solid #ACA899;background:transparent"></div>
<div class="a" style="left:393px;top:152px;width:34px;height:8px;background:#ECE9D8"></div>
<div class="m" style="left:395px;top:150px;transform:scaleX(.865);">Target</div>
<div class="a" style="left:496px;top:155px;width:81px;height:44px;border:1px solid #ACA899"></div>
<div class="a" style="left:497px;top:156px;width:81px;height:44px;border:1px solid #fff;border-right-color:#fff;border-bottom-color:#fff;clip-path:polygon(0 0,100% 0,100% 100%,0 100%)"></div>
<div class="a" style="left:496px;top:155px;width:81px;height:44px;border:1px solid #ACA899;background:transparent"></div>
<div class="a" style="left:500.7px;top:152px;width:46px;height:8px;background:#ECE9D8"></div>
<div class="m" style="left:502.7px;top:150px;transform:scaleX(.865);">App style</div>
<div class="a" style="left:584px;top:155px;width:129px;height:44px;border:1px solid #ACA899"></div>
<div class="a" style="left:585px;top:156px;width:129px;height:44px;border:1px solid #fff;border-right-color:#fff;border-bottom-color:#fff;clip-path:polygon(0 0,100% 0,100% 100%,0 100%)"></div>
<div class="a" style="left:584px;top:155px;width:129px;height:44px;border:1px solid #ACA899;background:transparent"></div>
<div class="a" style="left:589.2px;top:152px;width:68px;height:8px;background:#ECE9D8"></div>
<div class="m" style="left:591.2px;top:150px;transform:scaleX(.865);">Thread model</div>
<div class="a" style="left:396px;top:165px;width:93px;height:33px;border:1px solid #DDDCD6"></div>
<div class="a" style="left:592px;top:165px;width:118px;height:33px;border:1px solid #DDDCD6"></div>
<div class="a" style="left:388px;top:209px;width:58px;height:19px;border:1px solid #E2E0D8"></div>
<svg style="left:398px;top:166.7px" width="12" height="12" viewBox="0 0 12 12"><circle cx="6" cy="6" r="5" fill="#fff" stroke="#9C9A8E"/><path d="M2.3 9.2A5 5 0 0 1 9.2 2.3" fill="none" stroke="#202020" stroke-width="1.2"/></svg>
<div class="m" style="left:413.9px;top:166.7px;transform:scaleX(.865);">Executable</div>
<svg style="left:398px;top:183px" width="12" height="12" viewBox="0 0 12 12"><circle cx="6" cy="6" r="5" fill="#fff" stroke="#9C9A8E"/><path d="M2.3 9.2A5 5 0 0 1 9.2 2.3" fill="none" stroke="#202020" stroke-width="1.2"/></svg>
<div class="m" style="left:413.9px;top:183px;transform:scaleX(.865);">Dynamic library</div>
<svg style="left:505.8px;top:166.7px" width="12" height="12" viewBox="0 0 12 12"><circle cx="6" cy="6" r="5" fill="#fff" stroke="#9C9A8E"/><path d="M2.3 9.2A5 5 0 0 1 9.2 2.3" fill="none" stroke="#202020" stroke-width="1.2"/></svg>
<div class="m" style="left:521.7px;top:166.7px;transform:scaleX(.865);">Console</div>
<svg style="left:505.8px;top:183px" width="12" height="12" viewBox="0 0 12 12"><circle cx="6" cy="6" r="5" fill="#fff" stroke="#9C9A8E"/><path d="M2.3 9.2A5 5 0 0 1 9.2 2.3" fill="none" stroke="#202020" stroke-width="1.2"/></svg>
<div class="m" style="left:521.7px;top:183px;transform:scaleX(.865);">GUI</div>
<svg style="left:593.8px;top:166.6px" width="12" height="12" viewBox="0 0 12 12"><circle cx="6" cy="6" r="5" fill="#fff" stroke="#9C9A8E"/><path d="M2.3 9.2A5 5 0 0 1 9.2 2.3" fill="none" stroke="#202020" stroke-width="1.2"/></svg>
<div class="m" style="left:609.7px;top:166.6px;transform:scaleX(.865);">Singlethreaded</div>
<svg style="left:593.8px;top:182.8px" width="12" height="12" viewBox="0 0 12 12"><circle cx="6" cy="6" r="5" fill="#fff" stroke="#9C9A8E"/><path d="M2.3 9.2A5 5 0 0 1 9.2 2.3" fill="none" stroke="#202020" stroke-width="1.2"/></svg>
<div class="m" style="left:609.7px;top:182.8px;transform:scaleX(.865);">Multithreaded</div>
<div class="m" style="left:388.9px;top:213px;transform:scaleX(.865);"><u style="text-decoration-color:#000">O</u>ther flags:</div>
<div class="a" style="left:448px;top:209px;width:267px;height:19px;background:#fff;border:1px solid;border-color:#ACA899 #fff #fff #ACA899;box-shadow:inset 1px 1px 0 #000"></div>
<div class="a" style="left:452px;top:213px;font-size:9.5px;line-height:12px;color:#C000FF;letter-spacing:.5px;font-family:'DejaVu Sans',sans-serif;white-space:nowrap;transform:scaleX(.85);transform-origin:0 0">String</div>
<div class="a" style="left:584px;top:237px;width:64px;height:24px;background:linear-gradient(#EAE8E0,#E4E1D6);border:1px solid;border-color:#fff #000 #000 #fff;box-shadow:inset -1px -1px 0 #ACA899"></div>
<div class="m" style="left:608px;top:243px;transform:scaleX(.865);">OK</div>
<div class="a" style="left:652px;top:237px;width:64px;height:24px;background:linear-gradient(#EAE8E0,#E4E1D6);border:1px solid;border-color:#fff #000 #000 #fff;box-shadow:inset -1px -1px 0 #ACA899"></div>
<div class="m" style="left:666.8px;top:243px;transform:scaleX(.865);">Cancel</div>
<div class="a" style="left:576px;top:186px;width:382px;height:10px;background:repeating-linear-gradient(to right,rgba(140,136,110,.75) 0,rgba(140,136,110,.75) 1px,transparent 1px,transparent 4px)"></div>
<div class="a" style="left:552px;top:199px;width:10px;height:521px;background:repeating-linear-gradient(to bottom,rgba(140,136,110,.75) 0,rgba(140,136,110,.75) 1px,transparent 1px,transparent 4px)"></div>
<div class="a" style="left:501px;top:162px;width:76px;height:40px;border:3px solid #00A08C"></div>
<div class="a" style="left:372px;top:172px;width:132px;height:2px;background:#AA0000"></div>
<div class="a" style="left:520px;top:141px;width:2px;height:24px;background:#AA0000"></div>
<div class="a" style="left:498px;top:159px;width:6px;height:6px;background:#0000FF"></div>
<div class="a" style="left:536px;top:159px;width:6px;height:6px;background:#0000FF"></div>
<div class="a" style="left:574px;top:159px;width:6px;height:6px;background:#0000FF"></div>
<div class="a" style="left:498px;top:179px;width:6px;height:6px;background:#0000FF"></div>
<div class="a" style="left:574px;top:179px;width:6px;height:6px;background:#0000FF"></div>
<div class="a" style="left:498px;top:199px;width:6px;height:6px;background:#0000FF"></div>
<div class="a" style="left:536px;top:199px;width:6px;height:6px;background:#0000FF"></div>
<div class="a" style="left:574px;top:199px;width:6px;height:6px;background:#0000FF"></div>
<div class="a" style="left:724px;top:206px;width:6px;height:6px;background:#0000FF"></div>
<div class="a" style="left:724px;top:269px;width:6px;height:6px;background:#0000FF"></div>
<div class="a" style="left:549px;top:270px;width:6px;height:6px;background:#0000FF"></div>
<div class="bl"></div><div class="br"></div><div class="bb"></div>
</div></body></html>
